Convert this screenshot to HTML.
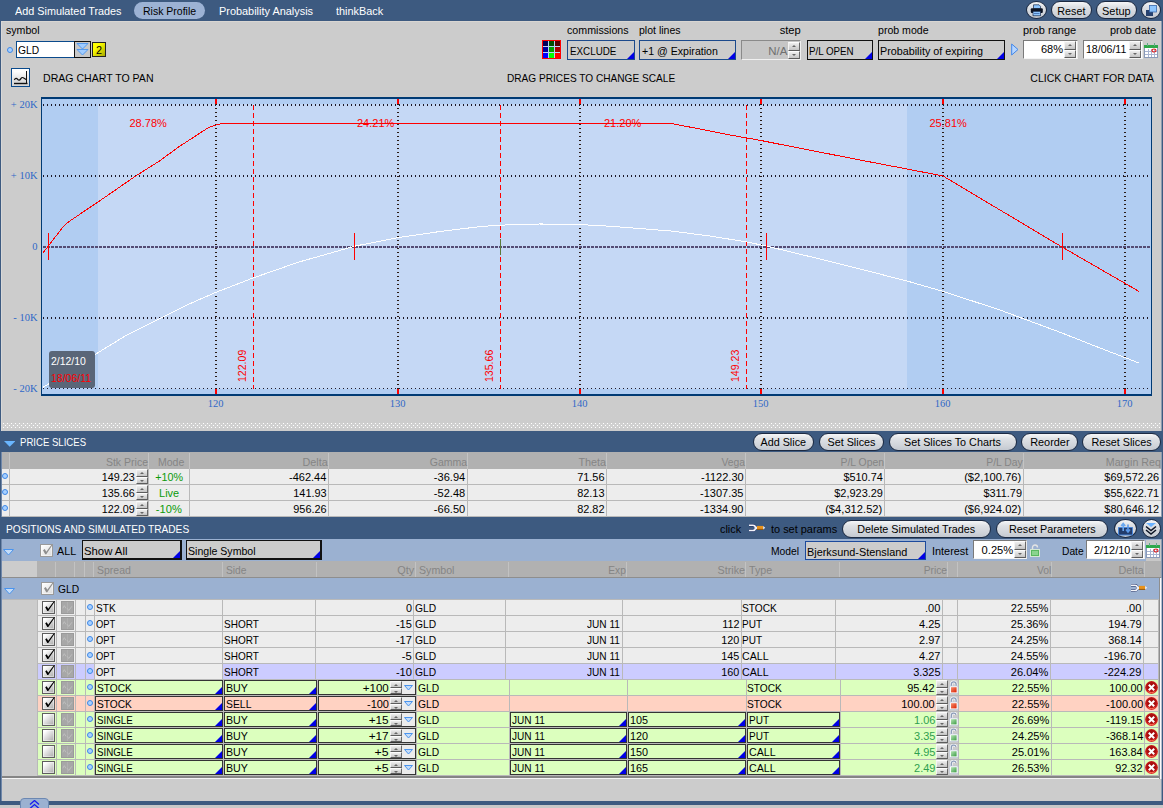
<!DOCTYPE html><html><head><meta charset="utf-8"><title>Risk Profile</title><style>
*{box-sizing:border-box;margin:0;padding:0}
html,body{width:1163px;height:808px;overflow:hidden;background:#cccccc}
body{font-family:"Liberation Sans",sans-serif;font-size:11px;color:#000;position:relative}
.a{position:absolute}
.t{position:absolute;white-space:nowrap;line-height:14px;height:14px;display:block}
.pill{position:absolute;height:18px;border:1px solid #1c2a42;border-radius:9px;background:linear-gradient(#f6f7f8,#dee1e5 30%,#cfd3d9 75%,#c3c8d0)}
.dd{position:absolute;background:#cccccc;border:1px solid #111}
.dd:after{content:"";position:absolute;right:0;bottom:0;border-style:solid;border-width:0 0 7px 7px;border-color:transparent transparent #0000e6 transparent}
.ed{position:absolute;height:15px;border:1px solid #343434}
.ed.tri:after{content:"";position:absolute;right:0;bottom:0;border-style:solid;border-width:0 0 7px 7px;border-color:transparent transparent #0000e6 transparent}
.sb{position:absolute;width:12px;background:linear-gradient(#efefef,#c4c4c4);border:1px solid;border-color:#fcfcfc #686868 #5c5c5c #f4f4f4}
.sb:after{content:"";position:absolute;left:3px;border-style:solid}
.sb.u:after{top:2px;border-width:0 2px 2px 2px;border-color:transparent transparent #666 transparent}
.sb.d:after{top:2px;border-width:2px 2px 0 2px;border-color:#666 transparent transparent transparent}
.rad{position:absolute;width:6px;height:6px;border-radius:50%;border:1.300px solid #3d88e8;background:#a8d0ff}
.cb{position:absolute;width:13px;height:13px;border:1px solid #5e5e5e;background:linear-gradient(135deg,#ffffff 15%,#d8d8d8 55%,#a8a8a8);box-shadow:inset 0 0 0 1px rgba(255,255,255,0.45)}
.ci{position:absolute;width:13px;height:13px;background:#a7a7a7;border:1px solid #9a9a9a}
.inp{position:absolute;height:19px;background:#fff;border:1px solid;border-color:#7a7a7a #e8e8e8 #f4f4f4 #7a7a7a}
</style></head><body>
<div class="a" style="left:0px;top:0px;width:1163px;height:21px;background:#3d5a80;"></div>
<div class="a" style="left:1px;top:21px;width:1161px;height:1px;background:#d9d6d2;"></div>
<div class="a" style="left:0px;top:21px;width:1px;height:787px;background:#3d5a80;"></div>
<div class="a" style="left:1px;top:21px;width:1px;height:410px;background:#d8d8d8;"></div>
<div class="a" style="left:1px;top:431px;width:1px;height:377px;background:#7088aa;"></div>
<div class="a" style="left:1162px;top:21px;width:1px;height:787px;background:#3d5a80;"></div>
<div class="a" style="left:1161px;top:21px;width:1px;height:787px;background:#8d9bb0;"></div>
<span class="t" style="top:4px;color:#fff;font-size:11px;left:14.5px;transform-origin:0 0;transform:scaleX(0.984);">Add Simulated Trades</span>
<div class="a" style="left:134px;top:2px;width:71px;height:17px;border-radius:9px;background:#9cb2d4"></div>
<span class="t" style="top:4px;color:#000;font-size:11px;left:143px;transform-origin:0 0;transform:scaleX(0.955);">Risk Profile</span>
<span class="t" style="top:4px;color:#fff;font-size:11px;left:219px;transform-origin:0 0;transform:scaleX(0.992);">Probability Analysis</span>
<span class="t" style="top:4px;color:#fff;font-size:11px;left:335.5px;transform-origin:0 0;transform:scaleX(0.988);">thinkBack</span>
<div class="pill" style="left:1026px;top:1px;width:21px;height:18px;border-radius:50%"></div>
<svg class="a" style="left:1030px;top:4px" width="14" height="13"><path d="M3.500 0.800h5.500l1.500 1.500v2.500h-7z" fill="#8ec6ff" stroke="#1a2a48" stroke-width="0.700"/><rect x="0.800" y="4.200" width="12" height="4.800" rx="1" fill="#0c1424"/><rect x="3" y="7.300" width="7.500" height="4.500" fill="#8ec6ff" stroke="#1a2a48" stroke-width="0.700"/><path d="M4 9.500h5.500" stroke="#3a66a8" stroke-width="0.800"/></svg>
<div class="pill" style="left:1051px;top:1px;width:41px"></div>
<span class="t" style="top:4px;color:#000;font-size:11px;left:1057.13px;transform-origin:50% 0;transform:scaleX(0.974);">Reset</span>
<div class="pill" style="left:1096px;top:1px;width:41px"></div>
<span class="t" style="top:4px;color:#000;font-size:11px;left:1102.13px;transform-origin:50% 0;transform:scaleX(0.995);">Setup</span>
<div class="pill" style="left:1141px;top:1px;width:20px;height:18px;border-radius:50%"></div>
<svg class="a" style="left:1145px;top:4px" width="13" height="13"><rect x="1" y="6" width="7" height="6" fill="#27416e"/><rect x="4.500" y="1.500" width="7" height="6.500" fill="#8ec6ff" stroke="#3a66a8" stroke-width="0.800"/></svg>
<span class="t" style="top:23px;color:#000;font-size:11px;left:5.5px;transform-origin:0 0;transform:scaleX(0.964);">symbol</span>
<div class="rad" style="left:7px;top:47px"></div>
<div class="a" style="left:16px;top:41px;width:59px;height:17px;background:#fff;border:1px solid #0a4a8c"></div>
<span class="t" style="top:43px;color:#000;font-size:11px;left:17.5px;transform-origin:0 0;transform:scaleX(0.933);">GLD</span>
<div class="a" style="left:74px;top:41px;width:17px;height:17px;background:#c8c8c8;border:1px solid #111"></div>
<svg class="a" style="left:76px;top:43px" width="13" height="13"><path d="M1 0.5h11l-5.5 5.5z" fill="#a0ccff" stroke="#4a94ee" stroke-width="0.9"/><path d="M1 6.5h11l-5.5 5.5z" fill="#a0ccff" stroke="#4a94ee" stroke-width="0.9"/></svg>
<div class="a" style="left:92px;top:42px;width:14px;height:15px;background:linear-gradient(135deg,#ffff00 30%,#a8a800);border:1px solid #222"></div>
<span class="t" style="top:43px;color:#000;font-size:11px;left:95.9412px;transform-origin:50% 0;transform:scaleX(0.982);">2</span>
<svg class="a" style="left:542px;top:40px" width="20" height="20"><rect x="0.5" y="0.5" width="19" height="19" fill="#b8d6f6"/><rect x="0" y="0" width="19" height="19" fill="#ff0000"/><rect x="1" y="1" width="17" height="17" fill="#b8d4f4"/><rect x="1" y="1" width="5" height="5" fill="#00005a"/><rect x="7" y="1" width="5" height="5" fill="#005000"/><rect x="13" y="1" width="5" height="5" fill="#580000"/><rect x="1" y="7" width="5" height="5" fill="#0000a0"/><rect x="7" y="7" width="5" height="5" fill="#00a000"/><rect x="13" y="7" width="5" height="5" fill="#a80000"/><rect x="1" y="13" width="5" height="5" fill="#0000ff"/><rect x="7" y="13" width="5" height="5" fill="#00ff00"/><rect x="13" y="13" width="5" height="5" fill="#ff0000"/><rect x="13" y="13" width="5" height="5" fill="#ff0000"/></svg>
<span class="t" style="top:23px;color:#000;font-size:11px;left:566.5px;transform-origin:0 0;transform:scaleX(0.969);">commissions</span>
<span class="t" style="top:23px;color:#000;font-size:11px;left:638.5px;transform-origin:0 0;transform:scaleX(0.958);">plot lines</span>
<span class="t" style="top:23px;color:#000;font-size:11px;right:362px;transform-origin:100% 0;transform:scaleX(1.015);">step</span>
<span class="t" style="top:23px;color:#000;font-size:11px;left:877.5px;transform-origin:0 0;transform:scaleX(0.962);">prob mode</span>
<span class="t" style="top:23px;color:#000;font-size:11px;left:1023px;transform-origin:0 0;transform:scaleX(0.998);">prob range</span>
<span class="t" style="top:23px;color:#000;font-size:11px;left:1109.5px;transform-origin:0 0;transform:scaleX(0.992);">prob date</span>
<div class="dd" style="left:567px;top:40px;width:68px;height:20px;border-color:#1c4a8c"></div>
<span class="t" style="top:44px;color:#000;font-size:11px;left:569.5px;transform-origin:0 0;transform:scaleX(0.893);">EXCLUDE</span>
<div class="dd" style="left:639px;top:40px;width:97px;height:20px;border-color:#1c4a8c"></div>
<span class="t" style="top:44px;color:#000;font-size:11px;left:641.5px;transform-origin:0 0;transform:scaleX(0.964);">+1 @ Expiration</span>
<div class="a" style="left:741px;top:40px;width:60px;height:20px;background:#c6c6c6;border:1px solid;border-color:#8a8a8a #f0f0f0 #f0f0f0 #8a8a8a"></div>
<span class="t" style="top:44px;color:#707070;font-size:11px;right:375.5px;transform-origin:100% 0;transform:scaleX(1.042);">N/A</span>
<div class="sb u" style="left:788px;top:42px;height:9px"></div><div class="sb d" style="left:788px;top:51px;height:8px"></div>
<div class="dd" style="left:807px;top:40px;width:66px;height:20px"></div>
<span class="t" style="top:44px;color:#000;font-size:11px;left:808.5px;transform-origin:0 0;transform:scaleX(0.887);">P/L OPEN</span>
<div class="dd" style="left:878px;top:40px;width:127px;height:20px"></div>
<span class="t" style="top:44px;color:#000;font-size:11px;left:879.5px;transform-origin:0 0;transform:scaleX(0.979);">Probability of expiring</span>
<svg class="a" style="left:1011px;top:43px" width="9" height="13"><path d="M0.7 1l6.3 5.5-6.3 5.5z" fill="#b6d6ff" stroke="#3f86ea"/></svg>
<div class="inp" style="left:1023px;top:40px;width:55px"></div>
<span class="t" style="top:42px;color:#000;font-size:11px;right:100px;transform-origin:100% 0;transform:scaleX(1.004);">68%</span>
<div class="sb u" style="left:1064px;top:41px;height:9px"></div><div class="sb d" style="left:1064px;top:50px;height:8px"></div>
<div class="inp" style="left:1083px;top:40px;width:60px"></div>
<span class="t" style="top:42px;color:#000;font-size:11px;left:1085.5px;transform-origin:0 0;transform:scaleX(0.960);">18/06/11</span>
<div class="sb u" style="left:1129px;top:41px;height:9px"></div><div class="sb d" style="left:1129px;top:50px;height:8px"></div>
<svg class="a" style="left:1144px;top:43px" width="14" height="15"><rect x="0.5" y="2.5" width="13" height="12" fill="#fff" stroke="#8a9ab8"/><rect x="0" y="2" width="14" height="3" fill="#2fa84a"/><path d="M3.5 0v3M10.5 0v3" stroke="#6a8" stroke-width="1"/><path d="M1 8.5h12M1 11.5h12M4.5 6v8M7.5 6v8M10.5 6v8" stroke="#a8b4d0" stroke-width="1"/><ellipse cx="10" cy="7.5" rx="2" ry="1.5" fill="none" stroke="#e02020" stroke-width="1.2"/></svg>
<div class="a" style="left:11px;top:68px;width:19px;height:19px;border:1px solid #0a4a8c;background:linear-gradient(#ffffff,#d4d4d4)"></div>
<svg class="a" style="left:13px;top:70px" width="15" height="15"><defs><linearGradient id="cg" x1="0" y1="0" x2="0" y2="1"><stop offset="0" stop-color="#ffffff"/><stop offset="1" stop-color="#d2d2d2"/></linearGradient></defs><rect x="1" y="1" width="13" height="13" fill="url(#cg)"/><path d="M13.500 1v13" stroke="#111" stroke-width="1"/><path d="M1 13.500h13.500" stroke="#111" stroke-width="1.400"/><path d="M1.300 9.800c1.200-1.800 2.300-1.800 3.400-.400s2.200.800 3.200-.800 2.300-1.200 3.200-.300l2.400 1.400" fill="none" stroke="#111" stroke-width="1.200"/></svg>
<span class="t" style="top:71px;color:#000;font-size:11px;left:43px;transform-origin:0 0;transform:scaleX(0.960);">DRAG CHART TO PAN</span>
<span class="t" style="top:71px;color:#000;font-size:11px;left:507px;transform-origin:0 0;transform:scaleX(0.919);">DRAG PRICES TO CHANGE SCALE</span>
<span class="t" style="top:71px;color:#000;font-size:11px;right:9px;transform-origin:100% 0;transform:scaleX(0.951);">CLICK CHART FOR DATA</span>
<svg class="a" style="left:0;top:90px" width="1163" height="330" font-family="Liberation Sans, sans-serif" shape-rendering="auto"><rect x="41" y="7" width="1111" height="299" fill="#003a74"/><rect x="42" y="9" width="1109" height="295" fill="#b1cdf2"/><rect x="98" y="14" width="809" height="285" fill="#c5d8f5"/><line x1="43" x2="1151" y1="15" y2="15" stroke="#1c1828" stroke-width="2" stroke-dasharray="1 3" shape-rendering="crispEdges"/><line x1="43" x2="1151" y1="86" y2="86" stroke="#1c1828" stroke-width="2" stroke-dasharray="1 3" shape-rendering="crispEdges"/><line x1="43" x2="1151" y1="228" y2="228" stroke="#1c1828" stroke-width="2" stroke-dasharray="1 3" shape-rendering="crispEdges"/><line x1="43" x2="1151" y1="298.5" y2="298.5" stroke="#1c1828" stroke-width="1" stroke-dasharray="1 3" shape-rendering="crispEdges"/><line x1="43" x2="1151" y1="157" y2="157" stroke="#544c74" stroke-width="2" stroke-dasharray="3 1" shape-rendering="crispEdges"/><line x1="216" x2="216" y1="14" y2="304" stroke="#2a1a14" stroke-width="2" stroke-dasharray="1 3" shape-rendering="crispEdges"/><rect x="215" y="9" width="2" height="5" fill="#ff0000"/><rect x="215" y="299" width="2" height="5" fill="#ff0000"/><text x="215.5" y="317" font-family="Liberation Serif, serif" font-size="10.5" fill="#2f68c8" text-anchor="middle">120</text><line x1="398" x2="398" y1="14" y2="304" stroke="#2a1a14" stroke-width="2" stroke-dasharray="1 3" shape-rendering="crispEdges"/><rect x="397" y="9" width="2" height="5" fill="#ff0000"/><rect x="397" y="299" width="2" height="5" fill="#ff0000"/><text x="397.5" y="317" font-family="Liberation Serif, serif" font-size="10.5" fill="#2f68c8" text-anchor="middle">130</text><line x1="580" x2="580" y1="14" y2="304" stroke="#2a1a14" stroke-width="2" stroke-dasharray="1 3" shape-rendering="crispEdges"/><rect x="579" y="9" width="2" height="5" fill="#ff0000"/><rect x="579" y="299" width="2" height="5" fill="#ff0000"/><text x="579.5" y="317" font-family="Liberation Serif, serif" font-size="10.5" fill="#2f68c8" text-anchor="middle">140</text><line x1="761" x2="761" y1="14" y2="304" stroke="#2a1a14" stroke-width="2" stroke-dasharray="1 3" shape-rendering="crispEdges"/><rect x="760" y="9" width="2" height="5" fill="#ff0000"/><rect x="760" y="299" width="2" height="5" fill="#ff0000"/><text x="760.5" y="317" font-family="Liberation Serif, serif" font-size="10.5" fill="#2f68c8" text-anchor="middle">150</text><line x1="943" x2="943" y1="14" y2="304" stroke="#2a1a14" stroke-width="2" stroke-dasharray="1 3" shape-rendering="crispEdges"/><rect x="942" y="9" width="2" height="5" fill="#ff0000"/><rect x="942" y="299" width="2" height="5" fill="#ff0000"/><text x="942.5" y="317" font-family="Liberation Serif, serif" font-size="10.5" fill="#2f68c8" text-anchor="middle">160</text><line x1="1125" x2="1125" y1="14" y2="304" stroke="#2a1a14" stroke-width="2" stroke-dasharray="1 3" shape-rendering="crispEdges"/><rect x="1124" y="9" width="2" height="5" fill="#ff0000"/><rect x="1124" y="299" width="2" height="5" fill="#ff0000"/><text x="1124.5" y="317" font-family="Liberation Serif, serif" font-size="10.5" fill="#2f68c8" text-anchor="middle">170</text><text x="37.5" y="18" font-family="Liberation Serif, serif" font-size="10.5" fill="#2f68c8" text-anchor="end">+ 20K</text><text x="37.5" y="89" font-family="Liberation Serif, serif" font-size="10.5" fill="#2f68c8" text-anchor="end">+ 10K</text><text x="37.5" y="160" font-family="Liberation Serif, serif" font-size="10.5" fill="#2f68c8" text-anchor="end">0</text><text x="37.5" y="231" font-family="Liberation Serif, serif" font-size="10.5" fill="#2f68c8" text-anchor="end">- 10K</text><text x="37.5" y="302" font-family="Liberation Serif, serif" font-size="10.5" fill="#2f68c8" text-anchor="end">- 20K</text><line x1="253.5" x2="253.5" y1="15" y2="299" stroke="#ff0000" stroke-width="1" stroke-dasharray="5 3" shape-rendering="crispEdges"/><text transform="translate(246,292) rotate(-90) scale(0.96,1)" font-size="11" fill="#ff0000">122.09</text><line x1="500.5" x2="500.5" y1="15" y2="299" stroke="#ff0000" stroke-width="1" stroke-dasharray="5 3" shape-rendering="crispEdges"/><text transform="translate(493,292) rotate(-90) scale(0.96,1)" font-size="11" fill="#ff0000">135.66</text><line x1="746.5" x2="746.5" y1="15" y2="299" stroke="#ff0000" stroke-width="1" stroke-dasharray="5 3" shape-rendering="crispEdges"/><text transform="translate(739,292) rotate(-90) scale(0.96,1)" font-size="11" fill="#ff0000">149.23</text><polyline fill="none" stroke="#ffffff" stroke-width="1" shape-rendering="crispEdges" points="43,297.3 70,281 95,264.5 126,245.5 162,227.5 188,214.5 216,202.3 253,188 298,172.3 354.5,156.2 397.5,147.7 440,141.5 480,136.6 500,135.2 520,134.4 540,134 560,134.1 580,134.6 600,135.6 620,137 671,141 710,146 747,152 766,156 820,169 860,179 907,191 943,201.4 1000,220 1062,243 1100,258 1139,273"/><polyline fill="none" stroke="#ff0000" stroke-width="1" shape-rendering="crispEdges" points="43,162.7 48.3,156.2 56,146 63,137 65.7,134 72,129.5 98,112 136,85.8 159,71.3 178.6,57 198.4,44.1 208.3,37.7 216.2,34.8 222.2,33.6 671,33.5 700,39 730,45 761,50.5 780,54.3 860,70 907,79 943,86 1000,120 1062,157 1139,201.4"/><rect x="48" y="143" width="1" height="27" fill="#ff0000"/><rect x="354" y="143" width="1" height="27" fill="#ff0000"/><rect x="766" y="143" width="1" height="27" fill="#ff0000"/><rect x="1062" y="143" width="1" height="27" fill="#ff0000"/><rect x="500" y="149" width="1" height="16" fill="#5a7a3a"/><text transform="translate(129.5,37) scale(1,1)" font-size="11" fill="#ff0000">28.78%</text><text transform="translate(357,37) scale(1,1)" font-size="11" fill="#ff0000">24.21%</text><text transform="translate(604,37) scale(1,1)" font-size="11" fill="#ff0000">21.20%</text><text transform="translate(929.5,37) scale(1,1)" font-size="11" fill="#ff0000">25.81%</text><rect x="49" y="261" width="46" height="37" rx="3" fill="#5a6678"/><text transform="translate(51,275) scale(0.95,1)" font-size="11" fill="#ffffff">2/12/10</text><text transform="translate(51,292) scale(0.955,1)" font-size="11" fill="#ff0000">18/06/11</text></svg>
<svg class="a" style="left:2px;top:423px" width="1159" height="5"><defs><pattern id="dp" width="4" height="4" patternUnits="userSpaceOnUse"><rect x="0" y="0" width="4" height="4" fill="#d0d0d0"/><rect x="1" y="0" width="1" height="1" fill="#ffffff"/><rect x="3" y="2" width="1" height="1" fill="#ffffff"/></pattern></defs><rect width="1159" height="5" fill="url(#dp)"/></svg>
<div class="a" style="left:0px;top:431px;width:1163px;height:21px;background:#3d5a80;"></div>
<svg class="a" style="left:4px;top:441px" width="11" height="6"><path d="M0 0h11.400l-5.700 5.800z" fill="#6ab6ff"/></svg>
<span class="t" style="top:435px;color:#fff;font-size:11px;left:20px;transform-origin:0 0;transform:scaleX(0.871);">PRICE SLICES</span>
<div class="pill" style="left:753px;top:433px;width:61px"></div>
<span class="t" style="top:435px;color:#000;font-size:11px;left:760.265px;transform-origin:50% 0;transform:scaleX(0.981);">Add Slice</span>
<div class="pill" style="left:819px;top:433px;width:65px"></div>
<span class="t" style="top:435px;color:#000;font-size:11px;left:827.045px;transform-origin:50% 0;transform:scaleX(0.983);">Set Slices</span>
<div class="pill" style="left:889px;top:433px;width:128px"></div>
<span class="t" style="top:435px;color:#000;font-size:11px;left:902.872px;transform-origin:50% 0;transform:scaleX(0.980);">Set Slices To Charts</span>
<div class="pill" style="left:1021px;top:433px;width:57px"></div>
<span class="t" style="top:435px;color:#000;font-size:11px;left:1029.63px;transform-origin:50% 0;transform:scaleX(0.991);">Reorder</span>
<div class="pill" style="left:1082px;top:433px;width:79px"></div>
<span class="t" style="top:435px;color:#000;font-size:11px;left:1090.93px;transform-origin:50% 0;transform:scaleX(0.981);">Reset Slices</span>
<div class="a" style="left:2px;top:452px;width:1159px;height:17px;background:#b1b1b1;"></div>
<div class="a" style="left:9px;top:453px;width:1px;height:16px;background:#c4c4c4;"></div>
<div class="a" style="left:148px;top:453px;width:1px;height:16px;background:#c4c4c4;"></div>
<div class="a" style="left:189px;top:453px;width:1px;height:16px;background:#c4c4c4;"></div>
<div class="a" style="left:328px;top:453px;width:1px;height:16px;background:#c4c4c4;"></div>
<div class="a" style="left:467px;top:453px;width:1px;height:16px;background:#c4c4c4;"></div>
<div class="a" style="left:606px;top:453px;width:1px;height:16px;background:#c4c4c4;"></div>
<div class="a" style="left:745px;top:453px;width:1px;height:16px;background:#c4c4c4;"></div>
<div class="a" style="left:884px;top:453px;width:1px;height:16px;background:#c4c4c4;"></div>
<div class="a" style="left:1023px;top:453px;width:1px;height:16px;background:#c4c4c4;"></div>
<span class="t" style="top:455px;color:#858585;font-size:11px;right:1015px;transform-origin:100% 0;transform:scaleX(0.957);">Stk Price</span>
<span class="t" style="top:455px;color:#858585;font-size:11px;left:157.5px;transform-origin:0 0;transform:scaleX(0.957);">Mode</span>
<span class="t" style="top:455px;color:#858585;font-size:11px;right:835px;transform-origin:100% 0;transform:scaleX(0.983);">Delta</span>
<span class="t" style="top:455px;color:#858585;font-size:11px;right:696px;transform-origin:100% 0;transform:scaleX(0.955);">Gamma</span>
<span class="t" style="top:455px;color:#858585;font-size:11px;right:557px;transform-origin:100% 0;transform:scaleX(0.985);">Theta</span>
<span class="t" style="top:455px;color:#858585;font-size:11px;right:418px;transform-origin:100% 0;transform:scaleX(0.940);">Vega</span>
<span class="t" style="top:455px;color:#858585;font-size:11px;right:279px;transform-origin:100% 0;transform:scaleX(0.946);">P/L Open</span>
<span class="t" style="top:455px;color:#858585;font-size:11px;right:140px;transform-origin:100% 0;transform:scaleX(0.943);">P/L Day</span>
<span class="t" style="top:455px;color:#858585;font-size:11px;right:2px;transform-origin:100% 0;transform:scaleX(0.969);">Margin Req</span>
<div class="a" style="left:2px;top:469px;width:1159px;height:16px;background:#ededed;"></div>
<div class="a" style="left:2px;top:484px;width:1159px;height:1px;background:#b9b9b9;"></div>
<div class="a" style="left:9px;top:469px;width:1px;height:16px;background:#b9b9b9;"></div>
<div class="a" style="left:148px;top:469px;width:1px;height:16px;background:#b9b9b9;"></div>
<div class="a" style="left:189px;top:469px;width:1px;height:16px;background:#b9b9b9;"></div>
<div class="a" style="left:328px;top:469px;width:1px;height:16px;background:#b9b9b9;"></div>
<div class="a" style="left:467px;top:469px;width:1px;height:16px;background:#b9b9b9;"></div>
<div class="a" style="left:606px;top:469px;width:1px;height:16px;background:#b9b9b9;"></div>
<div class="a" style="left:745px;top:469px;width:1px;height:16px;background:#b9b9b9;"></div>
<div class="a" style="left:884px;top:469px;width:1px;height:16px;background:#b9b9b9;"></div>
<div class="a" style="left:1023px;top:469px;width:1px;height:16px;background:#b9b9b9;"></div>
<div class="rad" style="left:2px;top:473px"></div>
<span class="t" style="top:470px;color:#000;font-size:11px;right:1028px;transform-origin:100% 0;transform:scaleX(0.978);">149.23</span>
<div class="sb u" style="left:136px;top:469px;height:8px"></div><div class="sb d" style="left:136px;top:477px;height:7px"></div>
<span class="t" style="top:470px;color:#0a9a0a;font-size:11px;left:154.78px;transform-origin:50% 0;transform:scaleX(0.977);">+10%</span>
<span class="t" style="top:470px;color:#000;font-size:11px;right:836.5px;transform-origin:100% 0;transform:scaleX(1.001);">-462.44</span>
<span class="t" style="top:470px;color:#000;font-size:11px;right:697.5px;transform-origin:100% 0;transform:scaleX(1.005);">-36.94</span>
<span class="t" style="top:470px;color:#000;font-size:11px;right:558.5px;transform-origin:100% 0;transform:scaleX(0.994);">71.56</span>
<span class="t" style="top:470px;color:#000;font-size:11px;right:419.5px;transform-origin:100% 0;transform:scaleX(0.999);">-1122.30</span>
<span class="t" style="top:470px;color:#000;font-size:11px;right:280.5px;transform-origin:100% 0;transform:scaleX(0.990);">$510.74</span>
<span class="t" style="top:470px;color:#000;font-size:11px;right:141.5px;transform-origin:100% 0;transform:scaleX(1.015);">($2,100.76)</span>
<span class="t" style="top:470px;color:#000;font-size:11px;right:3.5px;transform-origin:100% 0;transform:scaleX(0.994);">$69,572.26</span>
<div class="a" style="left:2px;top:485px;width:1159px;height:16px;background:#ededed;"></div>
<div class="a" style="left:2px;top:500px;width:1159px;height:1px;background:#b9b9b9;"></div>
<div class="a" style="left:9px;top:485px;width:1px;height:16px;background:#b9b9b9;"></div>
<div class="a" style="left:148px;top:485px;width:1px;height:16px;background:#b9b9b9;"></div>
<div class="a" style="left:189px;top:485px;width:1px;height:16px;background:#b9b9b9;"></div>
<div class="a" style="left:328px;top:485px;width:1px;height:16px;background:#b9b9b9;"></div>
<div class="a" style="left:467px;top:485px;width:1px;height:16px;background:#b9b9b9;"></div>
<div class="a" style="left:606px;top:485px;width:1px;height:16px;background:#b9b9b9;"></div>
<div class="a" style="left:745px;top:485px;width:1px;height:16px;background:#b9b9b9;"></div>
<div class="a" style="left:884px;top:485px;width:1px;height:16px;background:#b9b9b9;"></div>
<div class="a" style="left:1023px;top:485px;width:1px;height:16px;background:#b9b9b9;"></div>
<div class="rad" style="left:2px;top:489px"></div>
<span class="t" style="top:486px;color:#000;font-size:11px;right:1028px;transform-origin:100% 0;transform:scaleX(0.978);">135.66</span>
<div class="sb u" style="left:136px;top:485px;height:8px"></div><div class="sb d" style="left:136px;top:493px;height:7px"></div>
<span class="t" style="top:486px;color:#0a9a0a;font-size:11px;left:158.91px;transform-origin:50% 0;transform:scaleX(0.991);">Live</span>
<span class="t" style="top:486px;color:#000;font-size:11px;right:836.5px;transform-origin:100% 0;transform:scaleX(0.992);">141.93</span>
<span class="t" style="top:486px;color:#000;font-size:11px;right:697.5px;transform-origin:100% 0;transform:scaleX(1.005);">-52.48</span>
<span class="t" style="top:486px;color:#000;font-size:11px;right:558.5px;transform-origin:100% 0;transform:scaleX(0.994);">82.13</span>
<span class="t" style="top:486px;color:#000;font-size:11px;right:419.5px;transform-origin:100% 0;transform:scaleX(0.999);">-1307.35</span>
<span class="t" style="top:486px;color:#000;font-size:11px;right:280.5px;transform-origin:100% 0;transform:scaleX(0.995);">$2,923.29</span>
<span class="t" style="top:486px;color:#000;font-size:11px;right:141.5px;transform-origin:100% 0;transform:scaleX(0.990);">$311.79</span>
<span class="t" style="top:486px;color:#000;font-size:11px;right:3.5px;transform-origin:100% 0;transform:scaleX(0.994);">$55,622.71</span>
<div class="a" style="left:2px;top:501px;width:1159px;height:16px;background:#ededed;"></div>
<div class="a" style="left:2px;top:516px;width:1159px;height:1px;background:#b9b9b9;"></div>
<div class="a" style="left:9px;top:501px;width:1px;height:16px;background:#b9b9b9;"></div>
<div class="a" style="left:148px;top:501px;width:1px;height:16px;background:#b9b9b9;"></div>
<div class="a" style="left:189px;top:501px;width:1px;height:16px;background:#b9b9b9;"></div>
<div class="a" style="left:328px;top:501px;width:1px;height:16px;background:#b9b9b9;"></div>
<div class="a" style="left:467px;top:501px;width:1px;height:16px;background:#b9b9b9;"></div>
<div class="a" style="left:606px;top:501px;width:1px;height:16px;background:#b9b9b9;"></div>
<div class="a" style="left:745px;top:501px;width:1px;height:16px;background:#b9b9b9;"></div>
<div class="a" style="left:884px;top:501px;width:1px;height:16px;background:#b9b9b9;"></div>
<div class="a" style="left:1023px;top:501px;width:1px;height:16px;background:#b9b9b9;"></div>
<div class="rad" style="left:2px;top:505px"></div>
<span class="t" style="top:502px;color:#000;font-size:11px;right:1028px;transform-origin:100% 0;transform:scaleX(0.978);">122.09</span>
<div class="sb u" style="left:136px;top:501px;height:8px"></div><div class="sb d" style="left:136px;top:509px;height:7px"></div>
<span class="t" style="top:502px;color:#0a9a0a;font-size:11px;left:156.16px;transform-origin:50% 0;transform:scaleX(1.012);">-10%</span>
<span class="t" style="top:502px;color:#000;font-size:11px;right:836.5px;transform-origin:100% 0;transform:scaleX(0.992);">956.26</span>
<span class="t" style="top:502px;color:#000;font-size:11px;right:697.5px;transform-origin:100% 0;transform:scaleX(1.005);">-66.50</span>
<span class="t" style="top:502px;color:#000;font-size:11px;right:558.5px;transform-origin:100% 0;transform:scaleX(0.994);">82.82</span>
<span class="t" style="top:502px;color:#000;font-size:11px;right:419.5px;transform-origin:100% 0;transform:scaleX(0.999);">-1334.90</span>
<span class="t" style="top:502px;color:#000;font-size:11px;right:280.5px;transform-origin:100% 0;transform:scaleX(1.015);">($4,312.52)</span>
<span class="t" style="top:502px;color:#000;font-size:11px;right:141.5px;transform-origin:100% 0;transform:scaleX(1.015);">($6,924.02)</span>
<span class="t" style="top:502px;color:#000;font-size:11px;right:3.5px;transform-origin:100% 0;transform:scaleX(0.994);">$80,646.12</span>
<div class="a" style="left:0px;top:517px;width:1163px;height:22px;background:#3d5a80;"></div>
<span class="t" style="top:522px;color:#fff;font-size:11px;left:6px;transform-origin:0 0;transform:scaleX(0.924);">POSITIONS AND SIMULATED TRADES</span>
<span class="t" style="top:522px;color:#000;font-size:11px;left:720px;transform-origin:0 0;transform:scaleX(0.987);">click</span>
<svg class="a" style="left:748px;top:523px" width="18" height="10"><path d="M1 2.300H4.800A2.600 2.600 0 0 1 4.800 7.500H1" fill="none" stroke="#1c2c60" stroke-width="2.600"/><path d="M1 2.300H4.800A2.600 2.600 0 0 1 4.800 7.500H1" fill="none" stroke="#f4f4fa" stroke-width="1.600"/><rect x="7" y="3.600" width="2.200" height="2.600" fill="#f0f0f4"/><rect x="9" y="2.900" width="6.200" height="3.800" fill="#e8921c"/><rect x="9" y="5.900" width="6.200" height="0.900" fill="#8a5008"/><path d="M15.200 3.100l2 1.700-2 1.700z" fill="#eef0f8"/></svg>
<span class="t" style="top:522px;color:#000;font-size:11px;left:771px;transform-origin:0 0;transform:scaleX(0.993);">to set params</span>
<div class="pill" style="left:842px;top:520px;width:149px"></div>
<span class="t" style="top:522px;color:#000;font-size:11px;left:855.97px;transform-origin:50% 0;transform:scaleX(0.980);">Delete Simulated Trades</span>
<div class="pill" style="left:996px;top:520px;width:112px"></div>
<span class="t" style="top:522px;color:#000;font-size:11px;left:1007.68px;transform-origin:50% 0;transform:scaleX(0.977);">Reset Parameters</span>
<div class="pill" style="left:1114px;top:519px;width:23px;height:19px;border-radius:50%"></div><div class="pill" style="left:1142px;top:519px;width:19px;height:19px;border-radius:50%"></div>
<svg class="a" style="left:1117px;top:521px" width="17" height="15"><path d="M1.500 6.500h14v7.500h-14z" fill="#223c6c" stroke="#4a86d8" stroke-width="1"/><path d="M6.200 10V3.500M4.200 5l2-2.500 2 2.500" fill="none" stroke="#6aa8f0" stroke-width="1.600"/><path d="M11 3.500V10M9 8.500l2 2.500 2-2.500" fill="none" stroke="#5a98e8" stroke-width="1.600"/></svg>
<svg class="a" style="left:1145px;top:522px" width="12" height="13"><path d="M1 1h10l-5 4z" fill="#6ab2ff"/><path d="M1 4.500l5 4 5-4M1 8l5 4 5-4" fill="none" stroke="#0c1424" stroke-width="1.500"/></svg>
<div class="a" style="left:2px;top:539px;width:1159px;height:22px;background:#9bb1d1;"></div>
<svg class="a" style="left:3px;top:549px" width="11" height="7"><path d="M0.5 0.5h10l-5 5.5z" fill="#c4dcf8" stroke="#4a94ee"/></svg>
<div class="cb" style="left:40px;top:544px;border-color:#9a9a9a;background:linear-gradient(135deg,#fff,#dcdcdc)"></div><svg class="a" style="left:40px;top:544px" width="13" height="13"><path d="M3 6.200L4.800 5l1.500 2.800L11.500 0.800l0.800 0.500L6.300 10.300H5.200z" fill="#8e8e8e"/></svg>
<span class="t" style="top:544px;color:#000;font-size:11px;left:57px;transform-origin:0 0;transform:scaleX(0.976);">ALL</span>
<div class="dd" style="left:82px;top:540px;width:100px;height:20px;border-width:1px 2px 2px 1px"></div>
<span class="t" style="top:544px;color:#000;font-size:11px;left:83.5px;transform-origin:0 0;transform:scaleX(1.030);">Show All</span>
<div class="dd" style="left:186px;top:540px;width:136px;height:20px;border-width:1px 2px 2px 1px"></div>
<span class="t" style="top:544px;color:#000;font-size:11px;left:187.5px;transform-origin:0 0;transform:scaleX(0.961);">Single Symbol</span>
<span class="t" style="top:544px;color:#000;font-size:11px;left:771px;transform-origin:0 0;transform:scaleX(0.938);">Model</span>
<div class="dd" style="left:805px;top:541px;width:121px;height:19px;border-color:#1c4a9c"></div>
<span class="t" style="top:545px;color:#000;font-size:11px;left:807px;transform-origin:0 0;transform:scaleX(0.988);">Bjerksund-Stensland</span>
<span class="t" style="top:544px;color:#000;font-size:11px;left:932px;transform-origin:0 0;transform:scaleX(0.990);">Interest</span>
<div class="inp" style="left:973px;top:540px;width:54px"></div>
<span class="t" style="top:543px;color:#000;font-size:11px;right:150px;transform-origin:100% 0;transform:scaleX(1.013);">0.25%</span>
<div class="sb u" style="left:1014px;top:541px;height:9px"></div><div class="sb d" style="left:1014px;top:550px;height:8px"></div>
<svg class="a" style="left:1030px;top:544px" width="10" height="13"><path d="M2.500 6V3.500a2.500 2.500 0 0 1 5 0" fill="none" stroke="#e4e4e4" stroke-width="1.4"/><rect x="0.5" y="5.500" width="9" height="7" fill="#58b860" stroke="#d4e8d4"/><rect x="2" y="7" width="6" height="4" fill="#8ad48e"/></svg>
<span class="t" style="top:544px;color:#000;font-size:11px;left:1061.5px;transform-origin:0 0;transform:scaleX(0.930);">Date</span>
<div class="inp" style="left:1086px;top:540px;width:59px"></div>
<span class="t" style="top:543px;color:#000;font-size:11px;left:1094px;transform-origin:0 0;transform:scaleX(0.989);">2/12/10</span>
<div class="sb u" style="left:1131px;top:541px;height:9px"></div><div class="sb d" style="left:1131px;top:550px;height:8px"></div>
<div class="a" style="left:1146px;top:540px;width:15px;height:21px;background:#c8c8c8;"></div>
<svg class="a" style="left:1146px;top:543px" width="14" height="15"><rect x="0.5" y="2.5" width="13" height="12" fill="#fff" stroke="#8a9ab8"/><rect x="0" y="2" width="14" height="3" fill="#2fa84a"/><path d="M3.5 0v3M10.5 0v3" stroke="#6a8" stroke-width="1"/><path d="M1 8.5h12M1 11.5h12M4.5 6v8M7.5 6v8M10.5 6v8" stroke="#a8b4d0" stroke-width="1"/><ellipse cx="10" cy="7.5" rx="2" ry="1.5" fill="none" stroke="#e02020" stroke-width="1.2"/></svg>
<div class="a" style="left:37px;top:561px;width:1124px;height:16px;background:#b1b1b1;"></div>
<div class="a" style="left:2px;top:577px;width:1159px;height:1px;background:#8e8e8e;"></div>
<div class="a" style="left:55px;top:562px;width:1px;height:15px;background:#c2c2c2;"></div>
<div class="a" style="left:74px;top:562px;width:1px;height:15px;background:#c2c2c2;"></div>
<div class="a" style="left:84px;top:562px;width:1px;height:15px;background:#c2c2c2;"></div>
<div class="a" style="left:93px;top:562px;width:1px;height:15px;background:#c2c2c2;"></div>
<div class="a" style="left:222px;top:562px;width:1px;height:15px;background:#c2c2c2;"></div>
<div class="a" style="left:316px;top:562px;width:1px;height:15px;background:#c2c2c2;"></div>
<div class="a" style="left:415px;top:562px;width:1px;height:15px;background:#c2c2c2;"></div>
<div class="a" style="left:508px;top:562px;width:1px;height:15px;background:#c2c2c2;"></div>
<div class="a" style="left:626px;top:562px;width:1px;height:15px;background:#c2c2c2;"></div>
<div class="a" style="left:745px;top:562px;width:1px;height:15px;background:#c2c2c2;"></div>
<div class="a" style="left:839px;top:562px;width:1px;height:15px;background:#c2c2c2;"></div>
<div class="a" style="left:947px;top:562px;width:1px;height:15px;background:#c2c2c2;"></div>
<div class="a" style="left:957px;top:562px;width:1px;height:15px;background:#c2c2c2;"></div>
<div class="a" style="left:1051px;top:562px;width:1px;height:15px;background:#c2c2c2;"></div>
<div class="a" style="left:1144px;top:562px;width:1px;height:15px;background:#c2c2c2;"></div>
<span class="t" style="top:563px;color:#858585;font-size:11px;left:97px;transform-origin:0 0;transform:scaleX(0.954);">Spread</span>
<span class="t" style="top:563px;color:#858585;font-size:11px;left:225.5px;transform-origin:0 0;transform:scaleX(0.932);">Side</span>
<span class="t" style="top:563px;color:#858585;font-size:11px;right:749px;transform-origin:100% 0;transform:scaleX(0.990);">Qty</span>
<span class="t" style="top:563px;color:#858585;font-size:11px;left:419px;transform-origin:0 0;transform:scaleX(0.966);">Symbol</span>
<span class="t" style="top:563px;color:#858585;font-size:11px;right:537px;transform-origin:100% 0;transform:scaleX(0.934);">Exp</span>
<span class="t" style="top:563px;color:#858585;font-size:11px;right:418px;transform-origin:100% 0;transform:scaleX(0.980);">Strike</span>
<span class="t" style="top:563px;color:#858585;font-size:11px;left:749px;transform-origin:0 0;transform:scaleX(0.969);">Type</span>
<span class="t" style="top:563px;color:#858585;font-size:11px;right:216px;transform-origin:100% 0;transform:scaleX(0.934);">Price</span>
<span class="t" style="top:563px;color:#858585;font-size:11px;right:112px;transform-origin:100% 0;transform:scaleX(0.942);">Vol</span>
<span class="t" style="top:563px;color:#858585;font-size:11px;right:19px;transform-origin:100% 0;transform:scaleX(0.983);">Delta</span>
<div class="a" style="left:2px;top:578px;width:1159px;height:21px;background:#9bb1d1;"></div>
<svg class="a" style="left:4px;top:588px" width="11" height="7"><path d="M0.5 0.5h10l-5 5.5z" fill="#c4dcf8" stroke="#4a94ee"/></svg>
<div class="cb" style="left:41px;top:582px;border-color:#9a9a9a;background:linear-gradient(135deg,#fff,#dcdcdc)"></div><svg class="a" style="left:41px;top:582px" width="13" height="13"><path d="M3 6.200L4.800 5l1.500 2.800L11.500 0.800l0.800 0.500L6.300 10.300H5.200z" fill="#8e8e8e"/></svg>
<span class="t" style="top:582px;color:#000;font-size:11px;left:57.5px;transform-origin:0 0;transform:scaleX(0.933);">GLD</span>
<svg class="a" style="left:1130px;top:583px" width="18" height="10"><path d="M1 2.300H4.800A2.600 2.600 0 0 1 4.800 7.500H1" fill="none" stroke="#1c2c60" stroke-width="2.600"/><path d="M1 2.300H4.800A2.600 2.600 0 0 1 4.800 7.500H1" fill="none" stroke="#f4f4fa" stroke-width="1.600"/><rect x="7" y="3.600" width="2.200" height="2.600" fill="#f0f0f4"/><rect x="9" y="2.900" width="6.200" height="3.800" fill="#e8921c"/><rect x="9" y="5.900" width="6.200" height="0.900" fill="#8a5008"/><path d="M15.200 3.100l2 1.700-2 1.700z" fill="#eef0f8"/></svg>
<div class="a" style="left:37px;top:600px;width:1122px;height:16px;background:#ededed;"></div>
<div class="a" style="left:37px;top:600px;width:58px;height:16px;background:#ededed;"></div>
<div class="a" style="left:37px;top:600px;width:1px;height:16px;background:#b9b9b9;"></div>
<div class="a" style="left:56px;top:600px;width:1px;height:16px;background:#b9b9b9;"></div>
<div class="a" style="left:75px;top:600px;width:1px;height:16px;background:#b9b9b9;"></div>
<div class="a" style="left:85px;top:600px;width:1px;height:16px;background:#b9b9b9;"></div>
<div class="a" style="left:94px;top:600px;width:1px;height:16px;background:#b9b9b9;"></div>
<div class="cb" style="left:42px;top:601px"></div>
<svg class="a" style="left:42px;top:601px;overflow:visible" width="13" height="13"><path d="M3.200 6.300L4.700 5.200l1.500 2.600L12.100 0l0.700 0.500L6.300 10.100H5.300z" fill="#000"/></svg>
<div class="ci" style="left:61px;top:601px"></div>
<svg class="a" style="left:61px;top:601px" width="13" height="13"><path d="M6.500 1V12" stroke="#b0b0b0" stroke-width="1"/><path d="M1.800 7.300L3.300 4.600L4.900 7.300M6.300 7.300L7.700 9.500L10.900 5.300" fill="none" stroke="#bebebe" stroke-width="1"/></svg>
<div class="rad" style="left:87px;top:604px"></div>
<div class="a" style="left:37px;top:615px;width:1122px;height:1px;background:#b9b9b9;"></div>
<div class="a" style="left:222px;top:600px;width:1px;height:16px;background:#b9b9b9;"></div>
<div class="a" style="left:315px;top:600px;width:1px;height:16px;background:#b9b9b9;"></div>
<div class="a" style="left:413px;top:600px;width:1px;height:16px;background:#b9b9b9;"></div>
<div class="a" style="left:505px;top:600px;width:1px;height:16px;background:#b9b9b9;"></div>
<div class="a" style="left:622px;top:600px;width:1px;height:16px;background:#b9b9b9;"></div>
<div class="a" style="left:741px;top:600px;width:1px;height:16px;background:#b9b9b9;"></div>
<div class="a" style="left:835px;top:600px;width:1px;height:16px;background:#b9b9b9;"></div>
<div class="a" style="left:942px;top:600px;width:1px;height:16px;background:#b9b9b9;"></div>
<div class="a" style="left:957px;top:600px;width:1px;height:16px;background:#b9b9b9;"></div>
<div class="a" style="left:1050px;top:600px;width:1px;height:16px;background:#b9b9b9;"></div>
<div class="a" style="left:1143px;top:600px;width:1px;height:16px;background:#b9b9b9;"></div>
<div class="a" style="left:1158px;top:600px;width:1px;height:16px;background:#b9b9b9;"></div>
<span class="t" style="top:601px;color:#000;font-size:11px;left:95.7px;transform-origin:0 0;transform:scaleX(0.916);">STK</span>
<span class="t" style="top:601px;color:#000;font-size:11px;right:751px;transform-origin:100% 0;transform:scaleX(0.982);">0</span>
<span class="t" style="top:601px;color:#000;font-size:11px;left:414.5px;transform-origin:0 0;transform:scaleX(0.933);">GLD</span>
<span class="t" style="top:601px;color:#000;font-size:11px;left:741.8px;transform-origin:0 0;transform:scaleX(0.926);">STOCK</span>
<span class="t" style="top:601px;color:#000;font-size:11px;right:222.7px;transform-origin:100% 0;transform:scaleX(1.003);">.00</span>
<span class="t" style="top:601px;color:#000;font-size:11px;right:114.9px;transform-origin:100% 0;transform:scaleX(1.005);">22.55%</span>
<span class="t" style="top:601px;color:#000;font-size:11px;right:21.7px;transform-origin:100% 0;transform:scaleX(1.003);">.00</span>
<div class="a" style="left:37px;top:616px;width:1122px;height:16px;background:#ededed;"></div>
<div class="a" style="left:37px;top:616px;width:58px;height:16px;background:#ededed;"></div>
<div class="a" style="left:37px;top:616px;width:1px;height:16px;background:#b9b9b9;"></div>
<div class="a" style="left:56px;top:616px;width:1px;height:16px;background:#b9b9b9;"></div>
<div class="a" style="left:75px;top:616px;width:1px;height:16px;background:#b9b9b9;"></div>
<div class="a" style="left:85px;top:616px;width:1px;height:16px;background:#b9b9b9;"></div>
<div class="a" style="left:94px;top:616px;width:1px;height:16px;background:#b9b9b9;"></div>
<div class="cb" style="left:42px;top:617px"></div>
<svg class="a" style="left:42px;top:617px;overflow:visible" width="13" height="13"><path d="M3.200 6.300L4.700 5.200l1.500 2.600L12.100 0l0.700 0.500L6.300 10.100H5.300z" fill="#000"/></svg>
<div class="ci" style="left:61px;top:617px"></div>
<svg class="a" style="left:61px;top:617px" width="13" height="13"><path d="M6.500 1V12" stroke="#b0b0b0" stroke-width="1"/><path d="M1.800 7.300L3.300 4.600L4.900 7.300M6.300 7.300L7.700 9.500L10.900 5.300" fill="none" stroke="#bebebe" stroke-width="1"/></svg>
<div class="rad" style="left:87px;top:620px"></div>
<div class="a" style="left:37px;top:631px;width:1122px;height:1px;background:#b9b9b9;"></div>
<div class="a" style="left:222px;top:616px;width:1px;height:16px;background:#b9b9b9;"></div>
<div class="a" style="left:315px;top:616px;width:1px;height:16px;background:#b9b9b9;"></div>
<div class="a" style="left:413px;top:616px;width:1px;height:16px;background:#b9b9b9;"></div>
<div class="a" style="left:505px;top:616px;width:1px;height:16px;background:#b9b9b9;"></div>
<div class="a" style="left:622px;top:616px;width:1px;height:16px;background:#b9b9b9;"></div>
<div class="a" style="left:741px;top:616px;width:1px;height:16px;background:#b9b9b9;"></div>
<div class="a" style="left:835px;top:616px;width:1px;height:16px;background:#b9b9b9;"></div>
<div class="a" style="left:942px;top:616px;width:1px;height:16px;background:#b9b9b9;"></div>
<div class="a" style="left:957px;top:616px;width:1px;height:16px;background:#b9b9b9;"></div>
<div class="a" style="left:1050px;top:616px;width:1px;height:16px;background:#b9b9b9;"></div>
<div class="a" style="left:1143px;top:616px;width:1px;height:16px;background:#b9b9b9;"></div>
<div class="a" style="left:1158px;top:616px;width:1px;height:16px;background:#b9b9b9;"></div>
<span class="t" style="top:617px;color:#000;font-size:11px;left:95.7px;transform-origin:0 0;transform:scaleX(0.854);">OPT</span>
<span class="t" style="top:617px;color:#000;font-size:11px;left:223.5px;transform-origin:0 0;transform:scaleX(0.909);">SHORT</span>
<span class="t" style="top:617px;color:#000;font-size:11px;right:751px;transform-origin:100% 0;transform:scaleX(1.007);">-15</span>
<span class="t" style="top:617px;color:#000;font-size:11px;left:414.5px;transform-origin:0 0;transform:scaleX(0.933);">GLD</span>
<span class="t" style="top:617px;color:#000;font-size:11px;right:543px;transform-origin:100% 0;transform:scaleX(0.916);">JUN 11</span>
<span class="t" style="top:617px;color:#000;font-size:11px;right:423.5px;transform-origin:100% 0;transform:scaleX(0.982);">112</span>
<span class="t" style="top:617px;color:#000;font-size:11px;left:741.8px;transform-origin:0 0;transform:scaleX(0.909);">PUT</span>
<span class="t" style="top:617px;color:#000;font-size:11px;right:222.7px;transform-origin:100% 0;transform:scaleX(0.997);">4.25</span>
<span class="t" style="top:617px;color:#000;font-size:11px;right:114.9px;transform-origin:100% 0;transform:scaleX(1.005);">25.36%</span>
<span class="t" style="top:617px;color:#000;font-size:11px;right:21.7px;transform-origin:100% 0;transform:scaleX(0.992);">194.79</span>
<div class="a" style="left:37px;top:632px;width:1122px;height:16px;background:#ededed;"></div>
<div class="a" style="left:37px;top:632px;width:58px;height:16px;background:#ededed;"></div>
<div class="a" style="left:37px;top:632px;width:1px;height:16px;background:#b9b9b9;"></div>
<div class="a" style="left:56px;top:632px;width:1px;height:16px;background:#b9b9b9;"></div>
<div class="a" style="left:75px;top:632px;width:1px;height:16px;background:#b9b9b9;"></div>
<div class="a" style="left:85px;top:632px;width:1px;height:16px;background:#b9b9b9;"></div>
<div class="a" style="left:94px;top:632px;width:1px;height:16px;background:#b9b9b9;"></div>
<div class="cb" style="left:42px;top:633px"></div>
<svg class="a" style="left:42px;top:633px;overflow:visible" width="13" height="13"><path d="M3.200 6.300L4.700 5.200l1.500 2.600L12.100 0l0.700 0.500L6.300 10.100H5.300z" fill="#000"/></svg>
<div class="ci" style="left:61px;top:633px"></div>
<svg class="a" style="left:61px;top:633px" width="13" height="13"><path d="M6.500 1V12" stroke="#b0b0b0" stroke-width="1"/><path d="M1.800 7.300L3.300 4.600L4.900 7.300M6.300 7.300L7.700 9.500L10.900 5.300" fill="none" stroke="#bebebe" stroke-width="1"/></svg>
<div class="rad" style="left:87px;top:636px"></div>
<div class="a" style="left:37px;top:647px;width:1122px;height:1px;background:#b9b9b9;"></div>
<div class="a" style="left:222px;top:632px;width:1px;height:16px;background:#b9b9b9;"></div>
<div class="a" style="left:315px;top:632px;width:1px;height:16px;background:#b9b9b9;"></div>
<div class="a" style="left:413px;top:632px;width:1px;height:16px;background:#b9b9b9;"></div>
<div class="a" style="left:505px;top:632px;width:1px;height:16px;background:#b9b9b9;"></div>
<div class="a" style="left:622px;top:632px;width:1px;height:16px;background:#b9b9b9;"></div>
<div class="a" style="left:741px;top:632px;width:1px;height:16px;background:#b9b9b9;"></div>
<div class="a" style="left:835px;top:632px;width:1px;height:16px;background:#b9b9b9;"></div>
<div class="a" style="left:942px;top:632px;width:1px;height:16px;background:#b9b9b9;"></div>
<div class="a" style="left:957px;top:632px;width:1px;height:16px;background:#b9b9b9;"></div>
<div class="a" style="left:1050px;top:632px;width:1px;height:16px;background:#b9b9b9;"></div>
<div class="a" style="left:1143px;top:632px;width:1px;height:16px;background:#b9b9b9;"></div>
<div class="a" style="left:1158px;top:632px;width:1px;height:16px;background:#b9b9b9;"></div>
<span class="t" style="top:633px;color:#000;font-size:11px;left:95.7px;transform-origin:0 0;transform:scaleX(0.854);">OPT</span>
<span class="t" style="top:633px;color:#000;font-size:11px;left:223.5px;transform-origin:0 0;transform:scaleX(0.909);">SHORT</span>
<span class="t" style="top:633px;color:#000;font-size:11px;right:751px;transform-origin:100% 0;transform:scaleX(1.007);">-17</span>
<span class="t" style="top:633px;color:#000;font-size:11px;left:414.5px;transform-origin:0 0;transform:scaleX(0.933);">GLD</span>
<span class="t" style="top:633px;color:#000;font-size:11px;right:543px;transform-origin:100% 0;transform:scaleX(0.916);">JUN 11</span>
<span class="t" style="top:633px;color:#000;font-size:11px;right:423.5px;transform-origin:100% 0;transform:scaleX(0.982);">120</span>
<span class="t" style="top:633px;color:#000;font-size:11px;left:741.8px;transform-origin:0 0;transform:scaleX(0.909);">PUT</span>
<span class="t" style="top:633px;color:#000;font-size:11px;right:222.7px;transform-origin:100% 0;transform:scaleX(0.997);">2.97</span>
<span class="t" style="top:633px;color:#000;font-size:11px;right:114.9px;transform-origin:100% 0;transform:scaleX(1.005);">24.25%</span>
<span class="t" style="top:633px;color:#000;font-size:11px;right:21.7px;transform-origin:100% 0;transform:scaleX(0.992);">368.14</span>
<div class="a" style="left:37px;top:648px;width:1122px;height:16px;background:#ededed;"></div>
<div class="a" style="left:37px;top:648px;width:58px;height:16px;background:#ededed;"></div>
<div class="a" style="left:37px;top:648px;width:1px;height:16px;background:#b9b9b9;"></div>
<div class="a" style="left:56px;top:648px;width:1px;height:16px;background:#b9b9b9;"></div>
<div class="a" style="left:75px;top:648px;width:1px;height:16px;background:#b9b9b9;"></div>
<div class="a" style="left:85px;top:648px;width:1px;height:16px;background:#b9b9b9;"></div>
<div class="a" style="left:94px;top:648px;width:1px;height:16px;background:#b9b9b9;"></div>
<div class="cb" style="left:42px;top:649px"></div>
<svg class="a" style="left:42px;top:649px;overflow:visible" width="13" height="13"><path d="M3.200 6.300L4.700 5.200l1.500 2.600L12.100 0l0.700 0.500L6.300 10.100H5.300z" fill="#000"/></svg>
<div class="ci" style="left:61px;top:649px"></div>
<svg class="a" style="left:61px;top:649px" width="13" height="13"><path d="M6.500 1V12" stroke="#b0b0b0" stroke-width="1"/><path d="M1.800 7.300L3.300 4.600L4.900 7.300M6.300 7.300L7.700 9.500L10.900 5.300" fill="none" stroke="#bebebe" stroke-width="1"/></svg>
<div class="rad" style="left:87px;top:652px"></div>
<div class="a" style="left:37px;top:663px;width:1122px;height:1px;background:#b9b9b9;"></div>
<div class="a" style="left:222px;top:648px;width:1px;height:16px;background:#b9b9b9;"></div>
<div class="a" style="left:315px;top:648px;width:1px;height:16px;background:#b9b9b9;"></div>
<div class="a" style="left:413px;top:648px;width:1px;height:16px;background:#b9b9b9;"></div>
<div class="a" style="left:505px;top:648px;width:1px;height:16px;background:#b9b9b9;"></div>
<div class="a" style="left:622px;top:648px;width:1px;height:16px;background:#b9b9b9;"></div>
<div class="a" style="left:741px;top:648px;width:1px;height:16px;background:#b9b9b9;"></div>
<div class="a" style="left:835px;top:648px;width:1px;height:16px;background:#b9b9b9;"></div>
<div class="a" style="left:942px;top:648px;width:1px;height:16px;background:#b9b9b9;"></div>
<div class="a" style="left:957px;top:648px;width:1px;height:16px;background:#b9b9b9;"></div>
<div class="a" style="left:1050px;top:648px;width:1px;height:16px;background:#b9b9b9;"></div>
<div class="a" style="left:1143px;top:648px;width:1px;height:16px;background:#b9b9b9;"></div>
<div class="a" style="left:1158px;top:648px;width:1px;height:16px;background:#b9b9b9;"></div>
<span class="t" style="top:649px;color:#000;font-size:11px;left:95.7px;transform-origin:0 0;transform:scaleX(0.854);">OPT</span>
<span class="t" style="top:649px;color:#000;font-size:11px;left:223.5px;transform-origin:0 0;transform:scaleX(0.909);">SHORT</span>
<span class="t" style="top:649px;color:#000;font-size:11px;right:751px;transform-origin:100% 0;transform:scaleX(1.022);">-5</span>
<span class="t" style="top:649px;color:#000;font-size:11px;left:414.5px;transform-origin:0 0;transform:scaleX(0.933);">GLD</span>
<span class="t" style="top:649px;color:#000;font-size:11px;right:543px;transform-origin:100% 0;transform:scaleX(0.916);">JUN 11</span>
<span class="t" style="top:649px;color:#000;font-size:11px;right:423.5px;transform-origin:100% 0;transform:scaleX(0.982);">145</span>
<span class="t" style="top:649px;color:#000;font-size:11px;left:741.8px;transform-origin:0 0;transform:scaleX(0.967);">CALL</span>
<span class="t" style="top:649px;color:#000;font-size:11px;right:222.7px;transform-origin:100% 0;transform:scaleX(0.997);">4.27</span>
<span class="t" style="top:649px;color:#000;font-size:11px;right:114.9px;transform-origin:100% 0;transform:scaleX(1.005);">24.55%</span>
<span class="t" style="top:649px;color:#000;font-size:11px;right:21.7px;transform-origin:100% 0;transform:scaleX(1.001);">-196.70</span>
<div class="a" style="left:37px;top:664px;width:1122px;height:16px;background:#ededed;"></div>
<div class="a" style="left:37px;top:664px;width:57px;height:16px;background:#ccccff;"></div>
<div class="a" style="left:223px;top:664px;width:935px;height:16px;background:#ccccff;"></div>
<div class="a" style="left:37px;top:664px;width:58px;height:16px;background:#ccccff;"></div>
<div class="a" style="left:37px;top:664px;width:1px;height:16px;background:#b9b9b9;"></div>
<div class="a" style="left:56px;top:664px;width:1px;height:16px;background:#b9b9b9;"></div>
<div class="a" style="left:75px;top:664px;width:1px;height:16px;background:#b9b9b9;"></div>
<div class="a" style="left:85px;top:664px;width:1px;height:16px;background:#b9b9b9;"></div>
<div class="a" style="left:94px;top:664px;width:1px;height:16px;background:#b9b9b9;"></div>
<div class="cb" style="left:42px;top:665px"></div>
<svg class="a" style="left:42px;top:665px;overflow:visible" width="13" height="13"><path d="M3.200 6.300L4.700 5.200l1.500 2.600L12.100 0l0.700 0.500L6.300 10.100H5.300z" fill="#000"/></svg>
<div class="ci" style="left:61px;top:665px"></div>
<svg class="a" style="left:61px;top:665px" width="13" height="13"><path d="M6.500 1V12" stroke="#b0b0b0" stroke-width="1"/><path d="M1.800 7.300L3.300 4.600L4.900 7.300M6.300 7.300L7.700 9.500L10.900 5.300" fill="none" stroke="#bebebe" stroke-width="1"/></svg>
<div class="rad" style="left:87px;top:668px"></div>
<div class="a" style="left:37px;top:679px;width:1122px;height:1px;background:#b9b9b9;"></div>
<div class="a" style="left:222px;top:664px;width:1px;height:16px;background:#b9b9b9;"></div>
<div class="a" style="left:315px;top:664px;width:1px;height:16px;background:#b9b9b9;"></div>
<div class="a" style="left:413px;top:664px;width:1px;height:16px;background:#b9b9b9;"></div>
<div class="a" style="left:505px;top:664px;width:1px;height:16px;background:#b9b9b9;"></div>
<div class="a" style="left:622px;top:664px;width:1px;height:16px;background:#b9b9b9;"></div>
<div class="a" style="left:741px;top:664px;width:1px;height:16px;background:#b9b9b9;"></div>
<div class="a" style="left:835px;top:664px;width:1px;height:16px;background:#b9b9b9;"></div>
<div class="a" style="left:942px;top:664px;width:1px;height:16px;background:#b9b9b9;"></div>
<div class="a" style="left:957px;top:664px;width:1px;height:16px;background:#b9b9b9;"></div>
<div class="a" style="left:1050px;top:664px;width:1px;height:16px;background:#b9b9b9;"></div>
<div class="a" style="left:1143px;top:664px;width:1px;height:16px;background:#b9b9b9;"></div>
<div class="a" style="left:1158px;top:664px;width:1px;height:16px;background:#b9b9b9;"></div>
<span class="t" style="top:665px;color:#000;font-size:11px;left:95.7px;transform-origin:0 0;transform:scaleX(0.854);">OPT</span>
<span class="t" style="top:665px;color:#000;font-size:11px;left:223.5px;transform-origin:0 0;transform:scaleX(0.909);">SHORT</span>
<span class="t" style="top:665px;color:#000;font-size:11px;right:751px;transform-origin:100% 0;transform:scaleX(1.007);">-10</span>
<span class="t" style="top:665px;color:#000;font-size:11px;left:414.5px;transform-origin:0 0;transform:scaleX(0.933);">GLD</span>
<span class="t" style="top:665px;color:#000;font-size:11px;right:543px;transform-origin:100% 0;transform:scaleX(0.916);">JUN 11</span>
<span class="t" style="top:665px;color:#000;font-size:11px;right:423.5px;transform-origin:100% 0;transform:scaleX(0.982);">160</span>
<span class="t" style="top:665px;color:#000;font-size:11px;left:741.8px;transform-origin:0 0;transform:scaleX(0.967);">CALL</span>
<span class="t" style="top:665px;color:#000;font-size:11px;right:222.7px;transform-origin:100% 0;transform:scaleX(0.994);">3.325</span>
<span class="t" style="top:665px;color:#000;font-size:11px;right:114.9px;transform-origin:100% 0;transform:scaleX(1.005);">26.04%</span>
<span class="t" style="top:665px;color:#000;font-size:11px;right:21.7px;transform-origin:100% 0;transform:scaleX(1.001);">-224.29</span>
<div class="a" style="left:37px;top:680px;width:1122px;height:16px;background:#dcffbe;"></div>
<div class="a" style="left:37px;top:680px;width:58px;height:16px;background:#dcffbe;"></div>
<div class="a" style="left:37px;top:680px;width:1px;height:16px;background:#b9b9b9;"></div>
<div class="a" style="left:56px;top:680px;width:1px;height:16px;background:#b9b9b9;"></div>
<div class="a" style="left:75px;top:680px;width:1px;height:16px;background:#b9b9b9;"></div>
<div class="a" style="left:85px;top:680px;width:1px;height:16px;background:#b9b9b9;"></div>
<div class="a" style="left:94px;top:680px;width:1px;height:16px;background:#b9b9b9;"></div>
<div class="cb" style="left:42px;top:681px"></div>
<svg class="a" style="left:42px;top:681px;overflow:visible" width="13" height="13"><path d="M3.200 6.300L4.700 5.200l1.500 2.600L12.100 0l0.700 0.500L6.300 10.100H5.300z" fill="#000"/></svg>
<div class="ci" style="left:61px;top:681px"></div>
<svg class="a" style="left:61px;top:681px" width="13" height="13"><path d="M6.500 1V12" stroke="#b0b0b0" stroke-width="1"/><path d="M1.800 7.300L3.300 4.600L4.900 7.300M6.300 7.300L7.700 9.500L10.900 5.300" fill="none" stroke="#bebebe" stroke-width="1"/></svg>
<div class="rad" style="left:87px;top:684px"></div>
<div class="a" style="left:37px;top:695px;width:1122px;height:1px;background:#b9b9b9;"></div>
<div class="a" style="left:223px;top:680px;width:1px;height:16px;background:#b9b9b9;"></div>
<div class="a" style="left:317px;top:680px;width:1px;height:16px;background:#b9b9b9;"></div>
<div class="a" style="left:416px;top:680px;width:1px;height:16px;background:#b9b9b9;"></div>
<div class="a" style="left:509px;top:680px;width:1px;height:16px;background:#b9b9b9;"></div>
<div class="a" style="left:627px;top:680px;width:1px;height:16px;background:#b9b9b9;"></div>
<div class="a" style="left:746px;top:680px;width:1px;height:16px;background:#b9b9b9;"></div>
<div class="a" style="left:840px;top:680px;width:1px;height:16px;background:#b9b9b9;"></div>
<div class="a" style="left:958px;top:680px;width:1px;height:16px;background:#b9b9b9;"></div>
<div class="a" style="left:1051px;top:680px;width:1px;height:16px;background:#b9b9b9;"></div>
<div class="a" style="left:1144px;top:680px;width:1px;height:16px;background:#b9b9b9;"></div>
<div class="a" style="left:1158px;top:680px;width:1px;height:16px;background:#b9b9b9;"></div>
<div class="ed tri" style="left:95px;top:680px;width:128px"></div>
<span class="t" style="top:681px;color:#000;font-size:11px;left:96.5px;transform-origin:0 0;transform:scaleX(0.926);">STOCK</span>
<div class="ed tri" style="left:224px;top:680px;width:93px"></div>
<span class="t" style="top:681px;color:#000;font-size:11px;left:225.5px;transform-origin:0 0;transform:scaleX(0.968);">BUY</span>
<div class="ed" style="left:318px;top:680px;width:98px"></div>
<span class="t" style="top:681px;color:#000;font-size:11px;right:774px;transform-origin:100% 0;transform:scaleX(1.050);">+100</span>
<div class="a" style="left:390px;top:681px;width:12px;height:13px;background:#cbcbcb;"></div>
<div class="a" style="left:402px;top:681px;width:13px;height:13px;background:#ececec;"></div>
<div class="sb u" style="left:390px;top:681px;height:7px"></div><div class="sb d" style="left:390px;top:688px;height:6px"></div>
<svg class="a" style="left:404px;top:685px" width="9" height="6"><path d="M0.5 0.5h8l-4 4.500z" fill="#c4dcf8" stroke="#4a94ee"/></svg>
<span class="t" style="top:681px;color:#000;font-size:11px;left:417.5px;transform-origin:0 0;transform:scaleX(0.933);">GLD</span>
<span class="t" style="top:681px;color:#000;font-size:11px;left:747px;transform-origin:0 0;transform:scaleX(0.926);">STOCK</span>
<span class="t" style="top:681px;color:#000;font-size:11px;right:228px;transform-origin:100% 0;transform:scaleX(0.994);">95.42</span>
<div class="a" style="left:936px;top:680px;width:22px;height:15px;background:#cbcbcb;"></div>
<div class="sb u" style="left:936px;top:680px;height:8px"></div><div class="sb d" style="left:936px;top:688px;height:7px"></div>
<svg class="a" style="left:948px;top:680px" width="11" height="15"><defs><linearGradient id="lk1" x1="0" y1="0" x2="1" y2="1"><stop offset="0" stop-color="#f49070"/><stop offset="1" stop-color="#dc2000"/></linearGradient></defs><path d="M3.300 7V4.200a2.400 2.400 0 0 1 4.800 0V7" fill="none" stroke="#f4f6fa" stroke-width="2.800"/><path d="M3.300 7V4.200a2.400 2.400 0 0 1 4.800 0V7" fill="none" stroke="#8a9ab6" stroke-width="1.300"/><rect x="1.600" y="6" width="8.400" height="7.600" rx="1" fill="#ffffff" stroke="#b8c2d4" stroke-width="0.700"/><rect x="3" y="7.200" width="5.600" height="5.200" fill="url(#lk1)"/></svg>
<span class="t" style="top:681px;color:#000;font-size:11px;right:113.3px;transform-origin:100% 0;transform:scaleX(1.005);">22.55%</span>
<span class="t" style="top:681px;color:#000;font-size:11px;right:20.2px;transform-origin:100% 0;transform:scaleX(0.992);">100.00</span>
<svg class="a" style="left:1145px;top:681px" width="13" height="13"><defs><radialGradient id="xg" cx="0.5" cy="0.450" r="0.550"><stop offset="0" stop-color="#8c0404"/><stop offset="0.650" stop-color="#b01010"/><stop offset="1" stop-color="#e83030"/></radialGradient></defs><circle cx="6.500" cy="6.500" r="6.400" fill="url(#xg)"/><path d="M3.300 10.700a4 2 0 0 0 6.400 0" fill="none" stroke="#ff7858" stroke-width="1"/><path d="M3.800 3.800l5.400 5.400M9.200 3.800l-5.400 5.400" stroke="#ffffff" stroke-width="2.100"/></svg>
<div class="a" style="left:37px;top:696px;width:1122px;height:16px;background:#ffd2c2;"></div>
<div class="a" style="left:37px;top:696px;width:58px;height:16px;background:#ffd2c2;"></div>
<div class="a" style="left:37px;top:696px;width:1px;height:16px;background:#b9b9b9;"></div>
<div class="a" style="left:56px;top:696px;width:1px;height:16px;background:#b9b9b9;"></div>
<div class="a" style="left:75px;top:696px;width:1px;height:16px;background:#b9b9b9;"></div>
<div class="a" style="left:85px;top:696px;width:1px;height:16px;background:#b9b9b9;"></div>
<div class="a" style="left:94px;top:696px;width:1px;height:16px;background:#b9b9b9;"></div>
<div class="cb" style="left:42px;top:697px"></div>
<svg class="a" style="left:42px;top:697px;overflow:visible" width="13" height="13"><path d="M3.200 6.300L4.700 5.200l1.500 2.600L12.100 0l0.700 0.500L6.300 10.100H5.300z" fill="#000"/></svg>
<div class="ci" style="left:61px;top:697px"></div>
<svg class="a" style="left:61px;top:697px" width="13" height="13"><path d="M6.500 1V12" stroke="#b0b0b0" stroke-width="1"/><path d="M1.800 7.300L3.300 4.600L4.900 7.300M6.300 7.300L7.700 9.500L10.900 5.300" fill="none" stroke="#bebebe" stroke-width="1"/></svg>
<div class="rad" style="left:87px;top:700px"></div>
<div class="a" style="left:37px;top:711px;width:1122px;height:1px;background:#b9b9b9;"></div>
<div class="a" style="left:223px;top:696px;width:1px;height:16px;background:#b9b9b9;"></div>
<div class="a" style="left:317px;top:696px;width:1px;height:16px;background:#b9b9b9;"></div>
<div class="a" style="left:416px;top:696px;width:1px;height:16px;background:#b9b9b9;"></div>
<div class="a" style="left:509px;top:696px;width:1px;height:16px;background:#b9b9b9;"></div>
<div class="a" style="left:627px;top:696px;width:1px;height:16px;background:#b9b9b9;"></div>
<div class="a" style="left:746px;top:696px;width:1px;height:16px;background:#b9b9b9;"></div>
<div class="a" style="left:840px;top:696px;width:1px;height:16px;background:#b9b9b9;"></div>
<div class="a" style="left:958px;top:696px;width:1px;height:16px;background:#b9b9b9;"></div>
<div class="a" style="left:1051px;top:696px;width:1px;height:16px;background:#b9b9b9;"></div>
<div class="a" style="left:1144px;top:696px;width:1px;height:16px;background:#b9b9b9;"></div>
<div class="a" style="left:1158px;top:696px;width:1px;height:16px;background:#b9b9b9;"></div>
<div class="ed tri" style="left:95px;top:696px;width:128px"></div>
<span class="t" style="top:697px;color:#000;font-size:11px;left:96.5px;transform-origin:0 0;transform:scaleX(0.926);">STOCK</span>
<div class="ed tri" style="left:224px;top:696px;width:93px"></div>
<span class="t" style="top:697px;color:#000;font-size:11px;left:225.5px;transform-origin:0 0;transform:scaleX(0.944);">SELL</span>
<div class="ed" style="left:318px;top:696px;width:98px"></div>
<span class="t" style="top:697px;color:#000;font-size:11px;right:774px;transform-origin:100% 0;transform:scaleX(1.000);">-100</span>
<div class="a" style="left:390px;top:697px;width:12px;height:13px;background:#cbcbcb;"></div>
<div class="a" style="left:402px;top:697px;width:13px;height:13px;background:#ececec;"></div>
<div class="sb u" style="left:390px;top:697px;height:7px"></div><div class="sb d" style="left:390px;top:704px;height:6px"></div>
<svg class="a" style="left:404px;top:701px" width="9" height="6"><path d="M0.5 0.5h8l-4 4.500z" fill="#c4dcf8" stroke="#4a94ee"/></svg>
<span class="t" style="top:697px;color:#000;font-size:11px;left:417.5px;transform-origin:0 0;transform:scaleX(0.933);">GLD</span>
<span class="t" style="top:697px;color:#000;font-size:11px;left:747px;transform-origin:0 0;transform:scaleX(0.926);">STOCK</span>
<span class="t" style="top:697px;color:#000;font-size:11px;right:228px;transform-origin:100% 0;transform:scaleX(0.992);">100.00</span>
<div class="a" style="left:936px;top:696px;width:22px;height:15px;background:#cbcbcb;"></div>
<div class="sb u" style="left:936px;top:696px;height:8px"></div><div class="sb d" style="left:936px;top:704px;height:7px"></div>
<svg class="a" style="left:948px;top:696px" width="11" height="15"><defs><linearGradient id="lk1" x1="0" y1="0" x2="1" y2="1"><stop offset="0" stop-color="#f49070"/><stop offset="1" stop-color="#dc2000"/></linearGradient></defs><path d="M3.300 7V4.200a2.400 2.400 0 0 1 4.800 0V7" fill="none" stroke="#f4f6fa" stroke-width="2.800"/><path d="M3.300 7V4.200a2.400 2.400 0 0 1 4.800 0V7" fill="none" stroke="#8a9ab6" stroke-width="1.300"/><rect x="1.600" y="6" width="8.400" height="7.600" rx="1" fill="#ffffff" stroke="#b8c2d4" stroke-width="0.700"/><rect x="3" y="7.200" width="5.600" height="5.200" fill="url(#lk1)"/></svg>
<span class="t" style="top:697px;color:#000;font-size:11px;right:113.3px;transform-origin:100% 0;transform:scaleX(1.005);">22.55%</span>
<span class="t" style="top:697px;color:#000;font-size:11px;right:20.2px;transform-origin:100% 0;transform:scaleX(1.001);">-100.00</span>
<svg class="a" style="left:1145px;top:697px" width="13" height="13"><defs><radialGradient id="xg" cx="0.5" cy="0.450" r="0.550"><stop offset="0" stop-color="#8c0404"/><stop offset="0.650" stop-color="#b01010"/><stop offset="1" stop-color="#e83030"/></radialGradient></defs><circle cx="6.500" cy="6.500" r="6.400" fill="url(#xg)"/><path d="M3.300 10.700a4 2 0 0 0 6.400 0" fill="none" stroke="#ff7858" stroke-width="1"/><path d="M3.800 3.800l5.400 5.400M9.200 3.800l-5.400 5.400" stroke="#ffffff" stroke-width="2.100"/></svg>
<div class="a" style="left:37px;top:712px;width:1122px;height:16px;background:#dcffbe;"></div>
<div class="a" style="left:37px;top:712px;width:58px;height:16px;background:#dcffbe;"></div>
<div class="a" style="left:37px;top:712px;width:1px;height:16px;background:#b9b9b9;"></div>
<div class="a" style="left:56px;top:712px;width:1px;height:16px;background:#b9b9b9;"></div>
<div class="a" style="left:75px;top:712px;width:1px;height:16px;background:#b9b9b9;"></div>
<div class="a" style="left:85px;top:712px;width:1px;height:16px;background:#b9b9b9;"></div>
<div class="a" style="left:94px;top:712px;width:1px;height:16px;background:#b9b9b9;"></div>
<div class="cb" style="left:42px;top:713px"></div>
<div class="ci" style="left:61px;top:713px"></div>
<svg class="a" style="left:61px;top:713px" width="13" height="13"><path d="M6.500 1V12" stroke="#b0b0b0" stroke-width="1"/><path d="M1.800 7.300L3.300 4.600L4.900 7.300M6.300 7.300L7.700 9.500L10.900 5.300" fill="none" stroke="#bebebe" stroke-width="1"/></svg>
<div class="rad" style="left:87px;top:716px"></div>
<div class="a" style="left:37px;top:727px;width:1122px;height:1px;background:#b9b9b9;"></div>
<div class="a" style="left:223px;top:712px;width:1px;height:16px;background:#b9b9b9;"></div>
<div class="a" style="left:317px;top:712px;width:1px;height:16px;background:#b9b9b9;"></div>
<div class="a" style="left:416px;top:712px;width:1px;height:16px;background:#b9b9b9;"></div>
<div class="a" style="left:509px;top:712px;width:1px;height:16px;background:#b9b9b9;"></div>
<div class="a" style="left:627px;top:712px;width:1px;height:16px;background:#b9b9b9;"></div>
<div class="a" style="left:746px;top:712px;width:1px;height:16px;background:#b9b9b9;"></div>
<div class="a" style="left:840px;top:712px;width:1px;height:16px;background:#b9b9b9;"></div>
<div class="a" style="left:958px;top:712px;width:1px;height:16px;background:#b9b9b9;"></div>
<div class="a" style="left:1051px;top:712px;width:1px;height:16px;background:#b9b9b9;"></div>
<div class="a" style="left:1144px;top:712px;width:1px;height:16px;background:#b9b9b9;"></div>
<div class="a" style="left:1158px;top:712px;width:1px;height:16px;background:#b9b9b9;"></div>
<div class="ed tri" style="left:95px;top:712px;width:128px"></div>
<span class="t" style="top:713px;color:#000;font-size:11px;left:96.5px;transform-origin:0 0;transform:scaleX(0.885);">SINGLE</span>
<div class="ed tri" style="left:224px;top:712px;width:93px"></div>
<span class="t" style="top:713px;color:#000;font-size:11px;left:225.5px;transform-origin:0 0;transform:scaleX(0.968);">BUY</span>
<div class="ed" style="left:318px;top:712px;width:98px"></div>
<span class="t" style="top:713px;color:#000;font-size:11px;right:774px;transform-origin:100% 0;transform:scaleX(1.073);">+15</span>
<div class="a" style="left:390px;top:713px;width:12px;height:13px;background:#cbcbcb;"></div>
<div class="a" style="left:402px;top:713px;width:13px;height:13px;background:#ececec;"></div>
<div class="sb u" style="left:390px;top:713px;height:7px"></div><div class="sb d" style="left:390px;top:720px;height:6px"></div>
<svg class="a" style="left:404px;top:717px" width="9" height="6"><path d="M0.5 0.5h8l-4 4.500z" fill="#c4dcf8" stroke="#4a94ee"/></svg>
<span class="t" style="top:713px;color:#000;font-size:11px;left:417.5px;transform-origin:0 0;transform:scaleX(0.933);">GLD</span>
<div class="ed tri" style="left:510px;top:712px;width:117px"></div>
<span class="t" style="top:713px;color:#000;font-size:11px;left:511.5px;transform-origin:0 0;transform:scaleX(0.916);">JUN 11</span>
<div class="ed tri" style="left:628px;top:712px;width:118px"></div>
<span class="t" style="top:713px;color:#000;font-size:11px;left:629.5px;transform-origin:0 0;transform:scaleX(0.982);">105</span>
<div class="ed tri" style="left:747px;top:712px;width:93px"></div>
<span class="t" style="top:713px;color:#000;font-size:11px;left:748.5px;transform-origin:0 0;transform:scaleX(0.909);">PUT</span>
<span class="t" style="top:713px;color:#2ea04e;font-size:11px;right:228px;transform-origin:100% 0;transform:scaleX(0.997);">1.06</span>
<div class="a" style="left:936px;top:712px;width:22px;height:15px;background:#cbcbcb;"></div>
<div class="sb u" style="left:936px;top:712px;height:8px"></div><div class="sb d" style="left:936px;top:720px;height:7px"></div>
<svg class="a" style="left:948px;top:712px" width="11" height="15"><defs><linearGradient id="lk0" x1="0" y1="0" x2="1" y2="1"><stop offset="0" stop-color="#b4e4b4"/><stop offset="1" stop-color="#3c9c44"/></linearGradient></defs><path d="M3.300 6.500V3.600a2.400 2.400 0 0 1 4.700-0.800" fill="none" stroke="#f4f6fa" stroke-width="2.800"/><path d="M3.300 6.500V3.600a2.400 2.400 0 0 1 4.700-0.800" fill="none" stroke="#8a9ab6" stroke-width="1.300"/><rect x="1.600" y="6" width="8.400" height="7.600" rx="1" fill="#ffffff" stroke="#b8c2d4" stroke-width="0.700"/><rect x="3" y="7.200" width="5.600" height="5.200" fill="url(#lk0)"/></svg>
<span class="t" style="top:713px;color:#000;font-size:11px;right:113.3px;transform-origin:100% 0;transform:scaleX(1.005);">26.69%</span>
<span class="t" style="top:713px;color:#000;font-size:11px;right:20.2px;transform-origin:100% 0;transform:scaleX(1.001);">-119.15</span>
<svg class="a" style="left:1145px;top:713px" width="13" height="13"><defs><radialGradient id="xg" cx="0.5" cy="0.450" r="0.550"><stop offset="0" stop-color="#8c0404"/><stop offset="0.650" stop-color="#b01010"/><stop offset="1" stop-color="#e83030"/></radialGradient></defs><circle cx="6.500" cy="6.500" r="6.400" fill="url(#xg)"/><path d="M3.300 10.700a4 2 0 0 0 6.400 0" fill="none" stroke="#ff7858" stroke-width="1"/><path d="M3.800 3.800l5.400 5.400M9.200 3.800l-5.400 5.400" stroke="#ffffff" stroke-width="2.100"/></svg>
<div class="a" style="left:37px;top:728px;width:1122px;height:16px;background:#dcffbe;"></div>
<div class="a" style="left:37px;top:728px;width:58px;height:16px;background:#dcffbe;"></div>
<div class="a" style="left:37px;top:728px;width:1px;height:16px;background:#b9b9b9;"></div>
<div class="a" style="left:56px;top:728px;width:1px;height:16px;background:#b9b9b9;"></div>
<div class="a" style="left:75px;top:728px;width:1px;height:16px;background:#b9b9b9;"></div>
<div class="a" style="left:85px;top:728px;width:1px;height:16px;background:#b9b9b9;"></div>
<div class="a" style="left:94px;top:728px;width:1px;height:16px;background:#b9b9b9;"></div>
<div class="cb" style="left:42px;top:729px"></div>
<div class="ci" style="left:61px;top:729px"></div>
<svg class="a" style="left:61px;top:729px" width="13" height="13"><path d="M6.500 1V12" stroke="#b0b0b0" stroke-width="1"/><path d="M1.800 7.300L3.300 4.600L4.900 7.300M6.300 7.300L7.700 9.500L10.900 5.300" fill="none" stroke="#bebebe" stroke-width="1"/></svg>
<div class="rad" style="left:87px;top:732px"></div>
<div class="a" style="left:37px;top:743px;width:1122px;height:1px;background:#b9b9b9;"></div>
<div class="a" style="left:223px;top:728px;width:1px;height:16px;background:#b9b9b9;"></div>
<div class="a" style="left:317px;top:728px;width:1px;height:16px;background:#b9b9b9;"></div>
<div class="a" style="left:416px;top:728px;width:1px;height:16px;background:#b9b9b9;"></div>
<div class="a" style="left:509px;top:728px;width:1px;height:16px;background:#b9b9b9;"></div>
<div class="a" style="left:627px;top:728px;width:1px;height:16px;background:#b9b9b9;"></div>
<div class="a" style="left:746px;top:728px;width:1px;height:16px;background:#b9b9b9;"></div>
<div class="a" style="left:840px;top:728px;width:1px;height:16px;background:#b9b9b9;"></div>
<div class="a" style="left:958px;top:728px;width:1px;height:16px;background:#b9b9b9;"></div>
<div class="a" style="left:1051px;top:728px;width:1px;height:16px;background:#b9b9b9;"></div>
<div class="a" style="left:1144px;top:728px;width:1px;height:16px;background:#b9b9b9;"></div>
<div class="a" style="left:1158px;top:728px;width:1px;height:16px;background:#b9b9b9;"></div>
<div class="ed tri" style="left:95px;top:728px;width:128px"></div>
<span class="t" style="top:729px;color:#000;font-size:11px;left:96.5px;transform-origin:0 0;transform:scaleX(0.885);">SINGLE</span>
<div class="ed tri" style="left:224px;top:728px;width:93px"></div>
<span class="t" style="top:729px;color:#000;font-size:11px;left:225.5px;transform-origin:0 0;transform:scaleX(0.968);">BUY</span>
<div class="ed" style="left:318px;top:728px;width:98px"></div>
<span class="t" style="top:729px;color:#000;font-size:11px;right:774px;transform-origin:100% 0;transform:scaleX(1.073);">+17</span>
<div class="a" style="left:390px;top:729px;width:12px;height:13px;background:#cbcbcb;"></div>
<div class="a" style="left:402px;top:729px;width:13px;height:13px;background:#ececec;"></div>
<div class="sb u" style="left:390px;top:729px;height:7px"></div><div class="sb d" style="left:390px;top:736px;height:6px"></div>
<svg class="a" style="left:404px;top:733px" width="9" height="6"><path d="M0.5 0.5h8l-4 4.500z" fill="#c4dcf8" stroke="#4a94ee"/></svg>
<span class="t" style="top:729px;color:#000;font-size:11px;left:417.5px;transform-origin:0 0;transform:scaleX(0.933);">GLD</span>
<div class="ed tri" style="left:510px;top:728px;width:117px"></div>
<span class="t" style="top:729px;color:#000;font-size:11px;left:511.5px;transform-origin:0 0;transform:scaleX(0.916);">JUN 11</span>
<div class="ed tri" style="left:628px;top:728px;width:118px"></div>
<span class="t" style="top:729px;color:#000;font-size:11px;left:629.5px;transform-origin:0 0;transform:scaleX(0.982);">120</span>
<div class="ed tri" style="left:747px;top:728px;width:93px"></div>
<span class="t" style="top:729px;color:#000;font-size:11px;left:748.5px;transform-origin:0 0;transform:scaleX(0.909);">PUT</span>
<span class="t" style="top:729px;color:#2ea04e;font-size:11px;right:228px;transform-origin:100% 0;transform:scaleX(0.997);">3.35</span>
<div class="a" style="left:936px;top:728px;width:22px;height:15px;background:#cbcbcb;"></div>
<div class="sb u" style="left:936px;top:728px;height:8px"></div><div class="sb d" style="left:936px;top:736px;height:7px"></div>
<svg class="a" style="left:948px;top:728px" width="11" height="15"><defs><linearGradient id="lk0" x1="0" y1="0" x2="1" y2="1"><stop offset="0" stop-color="#b4e4b4"/><stop offset="1" stop-color="#3c9c44"/></linearGradient></defs><path d="M3.300 6.500V3.600a2.400 2.400 0 0 1 4.700-0.800" fill="none" stroke="#f4f6fa" stroke-width="2.800"/><path d="M3.300 6.500V3.600a2.400 2.400 0 0 1 4.700-0.800" fill="none" stroke="#8a9ab6" stroke-width="1.300"/><rect x="1.600" y="6" width="8.400" height="7.600" rx="1" fill="#ffffff" stroke="#b8c2d4" stroke-width="0.700"/><rect x="3" y="7.200" width="5.600" height="5.200" fill="url(#lk0)"/></svg>
<span class="t" style="top:729px;color:#000;font-size:11px;right:113.3px;transform-origin:100% 0;transform:scaleX(1.005);">24.25%</span>
<span class="t" style="top:729px;color:#000;font-size:11px;right:20.2px;transform-origin:100% 0;transform:scaleX(1.001);">-368.14</span>
<svg class="a" style="left:1145px;top:729px" width="13" height="13"><defs><radialGradient id="xg" cx="0.5" cy="0.450" r="0.550"><stop offset="0" stop-color="#8c0404"/><stop offset="0.650" stop-color="#b01010"/><stop offset="1" stop-color="#e83030"/></radialGradient></defs><circle cx="6.500" cy="6.500" r="6.400" fill="url(#xg)"/><path d="M3.300 10.700a4 2 0 0 0 6.400 0" fill="none" stroke="#ff7858" stroke-width="1"/><path d="M3.800 3.800l5.400 5.400M9.200 3.800l-5.400 5.400" stroke="#ffffff" stroke-width="2.100"/></svg>
<div class="a" style="left:37px;top:744px;width:1122px;height:16px;background:#dcffbe;"></div>
<div class="a" style="left:37px;top:744px;width:58px;height:16px;background:#dcffbe;"></div>
<div class="a" style="left:37px;top:744px;width:1px;height:16px;background:#b9b9b9;"></div>
<div class="a" style="left:56px;top:744px;width:1px;height:16px;background:#b9b9b9;"></div>
<div class="a" style="left:75px;top:744px;width:1px;height:16px;background:#b9b9b9;"></div>
<div class="a" style="left:85px;top:744px;width:1px;height:16px;background:#b9b9b9;"></div>
<div class="a" style="left:94px;top:744px;width:1px;height:16px;background:#b9b9b9;"></div>
<div class="cb" style="left:42px;top:745px"></div>
<div class="ci" style="left:61px;top:745px"></div>
<svg class="a" style="left:61px;top:745px" width="13" height="13"><path d="M6.500 1V12" stroke="#b0b0b0" stroke-width="1"/><path d="M1.800 7.300L3.300 4.600L4.900 7.300M6.300 7.300L7.700 9.500L10.900 5.300" fill="none" stroke="#bebebe" stroke-width="1"/></svg>
<div class="rad" style="left:87px;top:748px"></div>
<div class="a" style="left:37px;top:759px;width:1122px;height:1px;background:#b9b9b9;"></div>
<div class="a" style="left:223px;top:744px;width:1px;height:16px;background:#b9b9b9;"></div>
<div class="a" style="left:317px;top:744px;width:1px;height:16px;background:#b9b9b9;"></div>
<div class="a" style="left:416px;top:744px;width:1px;height:16px;background:#b9b9b9;"></div>
<div class="a" style="left:509px;top:744px;width:1px;height:16px;background:#b9b9b9;"></div>
<div class="a" style="left:627px;top:744px;width:1px;height:16px;background:#b9b9b9;"></div>
<div class="a" style="left:746px;top:744px;width:1px;height:16px;background:#b9b9b9;"></div>
<div class="a" style="left:840px;top:744px;width:1px;height:16px;background:#b9b9b9;"></div>
<div class="a" style="left:958px;top:744px;width:1px;height:16px;background:#b9b9b9;"></div>
<div class="a" style="left:1051px;top:744px;width:1px;height:16px;background:#b9b9b9;"></div>
<div class="a" style="left:1144px;top:744px;width:1px;height:16px;background:#b9b9b9;"></div>
<div class="a" style="left:1158px;top:744px;width:1px;height:16px;background:#b9b9b9;"></div>
<div class="ed tri" style="left:95px;top:744px;width:128px"></div>
<span class="t" style="top:745px;color:#000;font-size:11px;left:96.5px;transform-origin:0 0;transform:scaleX(0.885);">SINGLE</span>
<div class="ed tri" style="left:224px;top:744px;width:93px"></div>
<span class="t" style="top:745px;color:#000;font-size:11px;left:225.5px;transform-origin:0 0;transform:scaleX(0.968);">BUY</span>
<div class="ed" style="left:318px;top:744px;width:98px"></div>
<span class="t" style="top:745px;color:#000;font-size:11px;right:774px;transform-origin:100% 0;transform:scaleX(1.117);">+5</span>
<div class="a" style="left:390px;top:745px;width:12px;height:13px;background:#cbcbcb;"></div>
<div class="a" style="left:402px;top:745px;width:13px;height:13px;background:#ececec;"></div>
<div class="sb u" style="left:390px;top:745px;height:7px"></div><div class="sb d" style="left:390px;top:752px;height:6px"></div>
<svg class="a" style="left:404px;top:749px" width="9" height="6"><path d="M0.5 0.5h8l-4 4.500z" fill="#c4dcf8" stroke="#4a94ee"/></svg>
<span class="t" style="top:745px;color:#000;font-size:11px;left:417.5px;transform-origin:0 0;transform:scaleX(0.933);">GLD</span>
<div class="ed tri" style="left:510px;top:744px;width:117px"></div>
<span class="t" style="top:745px;color:#000;font-size:11px;left:511.5px;transform-origin:0 0;transform:scaleX(0.916);">JUN 11</span>
<div class="ed tri" style="left:628px;top:744px;width:118px"></div>
<span class="t" style="top:745px;color:#000;font-size:11px;left:629.5px;transform-origin:0 0;transform:scaleX(0.982);">150</span>
<div class="ed tri" style="left:747px;top:744px;width:93px"></div>
<span class="t" style="top:745px;color:#000;font-size:11px;left:748.5px;transform-origin:0 0;transform:scaleX(0.967);">CALL</span>
<span class="t" style="top:745px;color:#2ea04e;font-size:11px;right:228px;transform-origin:100% 0;transform:scaleX(0.997);">4.95</span>
<div class="a" style="left:936px;top:744px;width:22px;height:15px;background:#cbcbcb;"></div>
<div class="sb u" style="left:936px;top:744px;height:8px"></div><div class="sb d" style="left:936px;top:752px;height:7px"></div>
<svg class="a" style="left:948px;top:744px" width="11" height="15"><defs><linearGradient id="lk0" x1="0" y1="0" x2="1" y2="1"><stop offset="0" stop-color="#b4e4b4"/><stop offset="1" stop-color="#3c9c44"/></linearGradient></defs><path d="M3.300 6.500V3.600a2.400 2.400 0 0 1 4.700-0.800" fill="none" stroke="#f4f6fa" stroke-width="2.800"/><path d="M3.300 6.500V3.600a2.400 2.400 0 0 1 4.700-0.800" fill="none" stroke="#8a9ab6" stroke-width="1.300"/><rect x="1.600" y="6" width="8.400" height="7.600" rx="1" fill="#ffffff" stroke="#b8c2d4" stroke-width="0.700"/><rect x="3" y="7.200" width="5.600" height="5.200" fill="url(#lk0)"/></svg>
<span class="t" style="top:745px;color:#000;font-size:11px;right:113.3px;transform-origin:100% 0;transform:scaleX(1.005);">25.01%</span>
<span class="t" style="top:745px;color:#000;font-size:11px;right:20.2px;transform-origin:100% 0;transform:scaleX(0.992);">163.84</span>
<svg class="a" style="left:1145px;top:745px" width="13" height="13"><defs><radialGradient id="xg" cx="0.5" cy="0.450" r="0.550"><stop offset="0" stop-color="#8c0404"/><stop offset="0.650" stop-color="#b01010"/><stop offset="1" stop-color="#e83030"/></radialGradient></defs><circle cx="6.500" cy="6.500" r="6.400" fill="url(#xg)"/><path d="M3.300 10.700a4 2 0 0 0 6.400 0" fill="none" stroke="#ff7858" stroke-width="1"/><path d="M3.800 3.800l5.400 5.400M9.200 3.800l-5.400 5.400" stroke="#ffffff" stroke-width="2.100"/></svg>
<div class="a" style="left:37px;top:760px;width:1122px;height:16px;background:#dcffbe;"></div>
<div class="a" style="left:37px;top:760px;width:58px;height:16px;background:#dcffbe;"></div>
<div class="a" style="left:37px;top:760px;width:1px;height:16px;background:#b9b9b9;"></div>
<div class="a" style="left:56px;top:760px;width:1px;height:16px;background:#b9b9b9;"></div>
<div class="a" style="left:75px;top:760px;width:1px;height:16px;background:#b9b9b9;"></div>
<div class="a" style="left:85px;top:760px;width:1px;height:16px;background:#b9b9b9;"></div>
<div class="a" style="left:94px;top:760px;width:1px;height:16px;background:#b9b9b9;"></div>
<div class="cb" style="left:42px;top:761px"></div>
<div class="ci" style="left:61px;top:761px"></div>
<svg class="a" style="left:61px;top:761px" width="13" height="13"><path d="M6.500 1V12" stroke="#b0b0b0" stroke-width="1"/><path d="M1.800 7.300L3.300 4.600L4.900 7.300M6.300 7.300L7.700 9.500L10.900 5.300" fill="none" stroke="#bebebe" stroke-width="1"/></svg>
<div class="rad" style="left:87px;top:764px"></div>
<div class="a" style="left:37px;top:775px;width:1122px;height:1px;background:#b9b9b9;"></div>
<div class="a" style="left:223px;top:760px;width:1px;height:16px;background:#b9b9b9;"></div>
<div class="a" style="left:317px;top:760px;width:1px;height:16px;background:#b9b9b9;"></div>
<div class="a" style="left:416px;top:760px;width:1px;height:16px;background:#b9b9b9;"></div>
<div class="a" style="left:509px;top:760px;width:1px;height:16px;background:#b9b9b9;"></div>
<div class="a" style="left:627px;top:760px;width:1px;height:16px;background:#b9b9b9;"></div>
<div class="a" style="left:746px;top:760px;width:1px;height:16px;background:#b9b9b9;"></div>
<div class="a" style="left:840px;top:760px;width:1px;height:16px;background:#b9b9b9;"></div>
<div class="a" style="left:958px;top:760px;width:1px;height:16px;background:#b9b9b9;"></div>
<div class="a" style="left:1051px;top:760px;width:1px;height:16px;background:#b9b9b9;"></div>
<div class="a" style="left:1144px;top:760px;width:1px;height:16px;background:#b9b9b9;"></div>
<div class="a" style="left:1158px;top:760px;width:1px;height:16px;background:#b9b9b9;"></div>
<div class="ed tri" style="left:95px;top:760px;width:128px"></div>
<span class="t" style="top:761px;color:#000;font-size:11px;left:96.5px;transform-origin:0 0;transform:scaleX(0.885);">SINGLE</span>
<div class="ed tri" style="left:224px;top:760px;width:93px"></div>
<span class="t" style="top:761px;color:#000;font-size:11px;left:225.5px;transform-origin:0 0;transform:scaleX(0.968);">BUY</span>
<div class="ed" style="left:318px;top:760px;width:98px"></div>
<span class="t" style="top:761px;color:#000;font-size:11px;right:774px;transform-origin:100% 0;transform:scaleX(1.117);">+5</span>
<div class="a" style="left:390px;top:761px;width:12px;height:13px;background:#cbcbcb;"></div>
<div class="a" style="left:402px;top:761px;width:13px;height:13px;background:#ececec;"></div>
<div class="sb u" style="left:390px;top:761px;height:7px"></div><div class="sb d" style="left:390px;top:768px;height:6px"></div>
<svg class="a" style="left:404px;top:765px" width="9" height="6"><path d="M0.5 0.5h8l-4 4.500z" fill="#c4dcf8" stroke="#4a94ee"/></svg>
<span class="t" style="top:761px;color:#000;font-size:11px;left:417.5px;transform-origin:0 0;transform:scaleX(0.933);">GLD</span>
<div class="ed tri" style="left:510px;top:760px;width:117px"></div>
<span class="t" style="top:761px;color:#000;font-size:11px;left:511.5px;transform-origin:0 0;transform:scaleX(0.916);">JUN 11</span>
<div class="ed tri" style="left:628px;top:760px;width:118px"></div>
<span class="t" style="top:761px;color:#000;font-size:11px;left:629.5px;transform-origin:0 0;transform:scaleX(0.982);">165</span>
<div class="ed tri" style="left:747px;top:760px;width:93px"></div>
<span class="t" style="top:761px;color:#000;font-size:11px;left:748.5px;transform-origin:0 0;transform:scaleX(0.967);">CALL</span>
<span class="t" style="top:761px;color:#2ea04e;font-size:11px;right:228px;transform-origin:100% 0;transform:scaleX(0.997);">2.49</span>
<div class="a" style="left:936px;top:760px;width:22px;height:15px;background:#cbcbcb;"></div>
<div class="sb u" style="left:936px;top:760px;height:8px"></div><div class="sb d" style="left:936px;top:768px;height:7px"></div>
<svg class="a" style="left:948px;top:760px" width="11" height="15"><defs><linearGradient id="lk0" x1="0" y1="0" x2="1" y2="1"><stop offset="0" stop-color="#b4e4b4"/><stop offset="1" stop-color="#3c9c44"/></linearGradient></defs><path d="M3.300 6.500V3.600a2.400 2.400 0 0 1 4.700-0.800" fill="none" stroke="#f4f6fa" stroke-width="2.800"/><path d="M3.300 6.500V3.600a2.400 2.400 0 0 1 4.700-0.800" fill="none" stroke="#8a9ab6" stroke-width="1.300"/><rect x="1.600" y="6" width="8.400" height="7.600" rx="1" fill="#ffffff" stroke="#b8c2d4" stroke-width="0.700"/><rect x="3" y="7.200" width="5.600" height="5.200" fill="url(#lk0)"/></svg>
<span class="t" style="top:761px;color:#000;font-size:11px;right:113.3px;transform-origin:100% 0;transform:scaleX(1.005);">26.53%</span>
<span class="t" style="top:761px;color:#000;font-size:11px;right:20.2px;transform-origin:100% 0;transform:scaleX(0.994);">92.32</span>
<svg class="a" style="left:1145px;top:761px" width="13" height="13"><defs><radialGradient id="xg" cx="0.5" cy="0.450" r="0.550"><stop offset="0" stop-color="#8c0404"/><stop offset="0.650" stop-color="#b01010"/><stop offset="1" stop-color="#e83030"/></radialGradient></defs><circle cx="6.500" cy="6.500" r="6.400" fill="url(#xg)"/><path d="M3.300 10.700a4 2 0 0 0 6.400 0" fill="none" stroke="#ff7858" stroke-width="1"/><path d="M3.800 3.800l5.400 5.400M9.200 3.800l-5.400 5.400" stroke="#ffffff" stroke-width="2.100"/></svg>
<div class="a" style="left:2px;top:776px;width:1158px;height:2px;background:#858585;"></div>
<div class="a" style="left:2px;top:778px;width:1158px;height:1px;background:#f4f4f4;"></div>
<div class="a" style="left:1159px;top:578px;width:1px;height:201px;background:#8e8e8e;"></div>
<div class="a" style="left:1160px;top:578px;width:1px;height:201px;background:#fafafa;"></div>
<div class="a" style="left:1161px;top:578px;width:1px;height:201px;background:#b4bfd0;"></div>
<div class="a" style="left:2px;top:599px;width:1157px;height:1px;background:#b9b9b9;"></div>
<div class="a" style="left:0px;top:801px;width:1163px;height:4px;background:#3d5a80;"></div>
<div class="a" style="left:0px;top:805px;width:1163px;height:3px;background:#c8c8c8;"></div>
<div class="a" style="left:20px;top:798px;width:29px;height:12px;border:1px solid #6c88b2;border-radius:4px 4px 0 0;background:#9bb1d1"></div>
<svg class="a" style="left:29px;top:800px" width="11" height="9"><path d="M1 4.500l4.500-4 4.500 4M1 8.500l4.500-4 4.500 4" fill="none" stroke="#1a1af0" stroke-width="1.300"/></svg>
</body></html>
